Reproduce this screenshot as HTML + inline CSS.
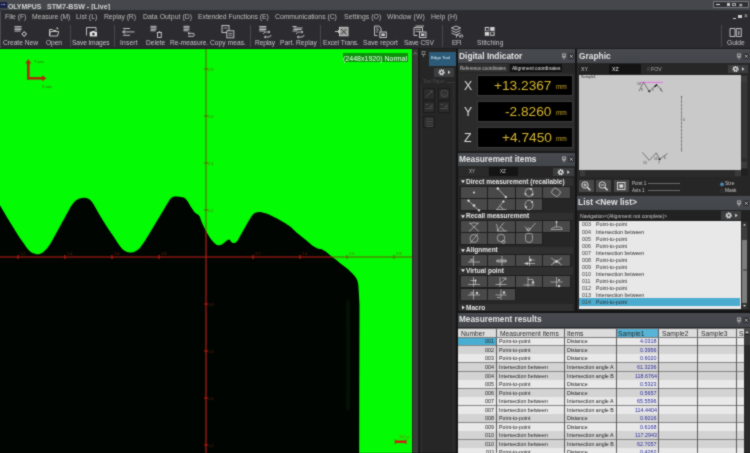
<!DOCTYPE html>
<html><head><meta charset="utf-8">
<style>
*{margin:0;padding:0;box-sizing:border-box}
html,body{width:750px;height:453px;overflow:hidden;background:#232325;font-family:"Liberation Sans",sans-serif}
.a{position:absolute}
.t{position:absolute;white-space:nowrap;line-height:1;will-change:transform}
.menu{color:#bdbdbd;font-size:6.85px;top:14.2px}
.tb{color:#c4c4c4;top:40.2px;font-size:6.65px}
.sep{position:absolute;top:25px;width:1px;height:22px;background:#47484b}
</style></head><body>
<svg width="0" height="0" style="position:absolute"><filter id="sb" x="0" y="0" width="100%" height="100%" color-interpolation-filters="sRGB"><feConvolveMatrix order="3" kernelMatrix="1 2 1 2 12 2 1 2 1" edgeMode="duplicate" preserveAlpha="true"/></filter></svg><div style="position:absolute;left:0;top:0;width:750px;height:453px;filter:url(#sb)">
<!-- TITLE BAR -->
<div class="a" style="left:0;top:0;width:750px;height:10px;background:#45474c"></div>
<div class="a" style="left:0;top:1.8px;width:6.5px;height:6.5px;background:#1b2048"></div>
<div class="a" style="left:0.5px;top:3.6px;width:1.6px;height:1.8px;background:#9aa4d0"></div>
<div class="a" style="left:3.2px;top:3.6px;width:1.6px;height:1.8px;background:#9aa4d0"></div>
<div class="t" style="left:7.8px;top:3.5px;font-size:6.85px;font-weight:bold;color:#d2d2d2">OLYMPUS</div>
<div class="t" style="left:46.8px;top:3.5px;font-size:7.1px;font-weight:bold;color:#d2d2d2">STM7-BSW - [Live]</div>
<div class="a" style="left:712.8px;top:0.8px;width:36.2px;height:7px;background:#77797d;border-radius:1px"></div>
<div class="a" style="left:714px;top:2.2px;width:34px;height:4.4px;background:#2e3034"></div>
<div class="a" style="left:716px;top:3.6px;width:4px;height:1.6px;background:#d8d8d8"></div>
<div class="a" style="left:726.5px;top:3.2px;width:3px;height:2.4px;background:#c8c8c8"></div>
<div class="a" style="left:732px;top:3px;width:3.5px;height:2.5px;border:0.7px solid #aaa"></div>
<div class="t" style="left:739.2px;top:1.9px;font-size:6px;color:#e8e8e8;font-weight:bold">×</div>
<!-- MENU BAR -->
<div class="a" style="left:0;top:10px;width:750px;height:39px;background:#2c2c30"></div>
<div class="a" style="left:0;top:11px;width:1px;height:38px;background:#4a4b4e"></div>
<div class="t menu" style="left:4.8px;letter-spacing:-0.055px">File (F)</div>
<div class="t menu" style="left:32px;letter-spacing:-0.042px">Measure (M)</div>
<div class="t menu" style="left:76.4px;letter-spacing:0.052px">List (L)</div>
<div class="t menu" style="left:104.1px;letter-spacing:-0.082px">Replay (R)</div>
<div class="t menu" style="left:142.5px;letter-spacing:0.054px">Data Output (D)</div>
<div class="t menu" style="left:198.1px;letter-spacing:-0.037px">Extended Functions (E)</div>
<div class="t menu" style="left:275.3px;letter-spacing:-0.031px">Communications (C)</div>
<div class="t menu" style="left:343.9px;letter-spacing:0.069px">Settings (O)</div>
<div class="t menu" style="left:387.2px;letter-spacing:0.045px">Window (W)</div>
<div class="t menu" style="left:431.3px;letter-spacing:0.114px">Help (H)</div>
<!-- mdi buttons -->
<div class="a" style="left:733px;top:18px;width:3px;height:1px;background:#ccc"></div>
<div class="a" style="left:738.3px;top:14.5px;width:3.8px;height:3.8px;background:#cfcfcf"></div>
<div class="t" style="left:744px;top:13.2px;font-size:6.5px;color:#ccc">×</div>
<div class="a" style="left:0;top:48px;width:750px;height:1px;background:#1d1e20"></div>
<!-- TOOLBAR labels -->
<div class="t tb" style="left:3.4px;letter-spacing:-0.012px">Create New</div>
<div class="t tb" style="left:46px;letter-spacing:-0.090px">Open</div>
<div class="t tb" style="left:72.3px;letter-spacing:-0.074px">Save images</div>
<div class="t tb" style="left:119.7px;letter-spacing:0.194px">Insert</div>
<div class="t tb" style="left:146px;letter-spacing:0.015px">Delete</div>
<div class="t tb" style="left:169.6px;letter-spacing:-0.004px">Re-measure.</div>
<div class="t tb" style="left:210px;letter-spacing:0.058px">Copy meas.</div>
<div class="t tb" style="left:255.4px;letter-spacing:-0.140px">Replay</div>
<div class="t tb" style="left:279.9px;letter-spacing:0.019px">Part. Replay</div>
<div class="t tb" style="left:323px;letter-spacing:-0.054px">Excel Trans.</div>
<div class="t tb" style="left:363.1px;letter-spacing:0.052px">Save report</div>
<div class="t tb" style="left:403.6px;letter-spacing:-0.111px">Save CSV</div>
<div class="t tb" style="left:452px;letter-spacing:-0.323px">EFI</div>
<div class="t tb" style="left:476.6px;letter-spacing:0.112px">Stitching</div>
<div class="t tb" style="left:727px;letter-spacing:-0.037px">Guide</div>
<div class="sep" style="left:70.2px"></div>
<div class="sep" style="left:113.6px"></div>
<div class="sep" style="left:250.2px"></div>
<div class="sep" style="left:320.1px"></div>
<div class="sep" style="left:441.6px"></div>
<div class="sep" style="left:720.6px"></div>
<!-- TOOLBAR icons -->
<svg class="a" style="left:0;top:0" width="750" height="49" viewBox="0 0 750 49" fill="none" stroke="#cfcfcf" stroke-width="0.9">
 <!-- create new -->
 <path d="M14.5,26.6h7M14.5,28.1h7M14.5,29.6h7M14.5,31.1h6"/>
 <circle cx="24.2" cy="34" r="1.8"/>
 <path d="M24.2,31.3v0.9M24.2,35.9v0.9M21.5,34h0.9M26,34h0.9" />
 <!-- open -->
 <path d="M49.5,29.5v6.5h8l1.2-4.5h-8.2l-1,4.5M49.5,29.5h3l0.8,1h3" />
 <path d="M56.5,27.6l1.6,1.4" stroke-width="1.2"/>
 <!-- save images -->
 <path d="M86.5,35.5v-8h9.5v3.5"/>
 <rect x="89.8" y="31.8" width="7.2" height="4.6" fill="#e8e8e8" stroke="none"/>
 <rect x="91.8" y="31" width="3" height="1.2" fill="#e8e8e8" stroke="none"/>
 <circle cx="93.4" cy="34.1" r="1.3" fill="#2c2c30" stroke="none"/>
 <!-- insert -->
 <path d="M123,28.5h7M123,35.3h7M122.5,31.9h12M125.3,30l-2.6,1.9l2.6,1.9"/>
 <!-- delete -->
 <path d="M150.5,26.3h6M150.5,27.8h6M150.5,29.3h6M150.5,30.8h5"/>
 <path d="M156.8,32.5h5.2M157.5,33v4.5h3.8v-4.5M158.8,31.7h1.4"/>
 <!-- re-measure -->
 <path d="M183.5,26.3h6M183.5,27.8h6M183.5,29.3h6M183.5,30.8h5"/>
 <path d="M188,33.3h5c1.8,0,1.8,3,0,3h-5M189.5,32l-1.5,1.3l1.5,1.3"/>
 <!-- copy meas -->
 <rect x="222" y="25.5" width="7" height="7"/>
 <rect x="226.8" y="30.8" width="7" height="7" fill="#2c2c30"/>
 <path d="M223.5,28h4M228.3,33.4h4M228.3,35.3h4" stroke-width="0.7"/>
 <!-- replay -->
 <path d="M259.3,26.5h7M259.3,28h7M259.3,29.5h7M259.3,31h6"/>
 <path d="M263.5,34c0,-1.5 1.5,-2 3,-2h3.5M268.5,31l1.5,1l-1.5,1M271,35c0,1.5 -1.5,2 -3,2h-3.5M265.8,38l-1.5,-1l1.5,-1"/>
 <!-- part replay -->
 <path d="M292.5,26.5h4M293.5,28h9M293.5,29.5h8M292.5,31h5"/>
 <path d="M296.5,34c0,-1.5 1.5,-2 3,-2h3.5M301.5,31l1.5,1l-1.5,1M304,35c0,1.5 -1.5,2 -3,2h-3.5M298.8,38l-1.5,-1l1.5,-1"/>
 <!-- excel trans -->
 <rect x="339.5" y="27.3" width="8.5" height="8.5" fill="#9a9a9a" stroke="#cfcfcf"/>
 <path d="M341,29l5.5,5.5M346.5,29l-5.5,5.5" stroke="#333" stroke-width="0.9"/>
 <path d="M335,31.5h4.5M338,30l1.5,1.5l-1.5,1.5"/>
 <!-- save report -->
 <path d="M374.5,26h4.5l2,2v5M374.5,26v9.5h3"/>
 <path d="M376,28h2.5M376,30h3M376,32h2" stroke-width="0.7"/>
 <rect x="379.8" y="32" width="6.5" height="5.5" fill="#2c2c30"/>
 <rect x="381.3" y="33.5" width="3.5" height="2.5" fill="#cfcfcf" stroke="none"/>
 <!-- save csv -->
 <path d="M414,27.5h8.5v5M414,27.5v8h3.5M415.5,26h8.5"/>
 <path d="M415.5,29.5h5.5M415.5,31.5h5.5" stroke-width="0.7"/>
 <rect x="419.5" y="32" width="6.5" height="5.5" fill="#2c2c30"/>
 <rect x="421" y="33.5" width="3.5" height="2.5" fill="#cfcfcf" stroke="none"/>
 <!-- efi -->
 <path d="M451.5,28l4.5,-2l4.5,2l-4.5,2zM451.5,30.5l4.5,2l4.5,-2M451.5,33l4.5,2l4.5,-2"/>
 <path d="M456.5,37.5v-2.3h2.5M459.8,37.5v-2.5M460.8,37.5v-2.3c0,-0.6 1.8,-0.6 1.8,0v2.3" stroke-width="0.8"/>
 <!-- stitching -->
 <rect x="484.8" y="27" width="9.8" height="8.8" fill="#d0d0d0" stroke="none"/>
 <path d="M489.7,27v8.8M484.8,31.4h9.8" stroke="#2c2c30" stroke-width="1"/>
 <rect x="485.8" y="28" width="2.8" height="2.4" fill="#2c2c30" stroke="none"/>
 <rect x="490.8" y="32.4" width="2.8" height="2.4" fill="#2c2c30" stroke="none"/>
 <!-- guide -->
 <path d="M730,28.5h5v8h-5zM736.3,28.5h5v8h-5z"/>
 <path d="M738.8,31v4M738.8,29.5v0.6" stroke-width="1"/>
</svg>

<div class="a" style="left:0;top:49px;width:412px;height:404px;background:#03fb03"></div>
<svg class="a" style="left:0;top:0" width="412" height="453" viewBox="0 0 412 453">
<defs><clipPath id="dk"><path d="M-9.67,189.53 L-9.35,190.06 L-8.92,190.77 L-8.42,191.57 L-7.91,192.41 L-7.39,193.26 L-6.86,194.11 L-6.34,194.97 L-5.82,195.82 L-5.29,196.67 L-4.77,197.52 L-4.25,198.38 L-3.72,199.23 L-3.20,200.08 L-2.68,200.93 L-2.16,201.79 L-1.63,202.64 L-1.11,203.49 L-0.59,204.35 L-0.08,205.20 L0.44,206.06 L0.94,206.92 L1.45,207.79 L1.95,208.65 L2.45,209.52 L2.96,210.38 L3.46,211.24 L3.96,212.11 L4.47,212.97 L4.97,213.84 L5.47,214.70 L5.98,215.56 L6.48,216.43 L6.99,217.29 L7.51,218.14 L8.03,218.99 L8.56,219.85 L9.08,220.70 L9.61,221.54 L10.14,222.39 L10.67,223.24 L11.19,224.09 L11.72,224.94 L12.25,225.79 L12.78,226.64 L13.30,227.49 L13.82,228.35 L14.35,229.20 L14.87,230.05 L15.39,230.90 L15.91,231.76 L16.43,232.61 L16.96,233.46 L17.48,234.32 L18.01,235.17 L18.54,236.01 L19.09,236.85 L19.65,237.67 L20.23,238.49 L20.81,239.30 L21.40,240.11 L21.99,240.92 L22.57,241.73 L23.15,242.55 L23.72,243.37 L24.28,244.19 L24.84,245.03 L25.39,245.86 L25.95,246.68 L26.53,247.50 L27.13,248.29 L27.77,249.05 L28.44,249.79 L29.13,250.51 L29.84,251.21 L30.59,251.84 L31.39,252.39 L32.25,252.84 L33.17,253.22 L34.10,253.56 L35.04,253.87 L35.99,254.14 L36.93,254.32 L37.86,254.34 L38.80,254.20 L39.72,253.92 L40.64,253.56 L41.54,253.15 L42.41,252.68 L43.22,252.13 L43.98,251.51 L44.70,250.83 L45.40,250.12 L46.09,249.39 L46.75,248.65 L47.38,247.88 L47.99,247.08 L48.58,246.28 L49.16,245.46 L49.73,244.64 L50.28,243.81 L50.82,242.97 L51.33,242.11 L51.83,241.25 L52.31,240.37 L52.80,239.50 L53.28,238.62 L53.76,237.75 L54.24,236.87 L54.73,235.99 L55.21,235.12 L55.69,234.24 L56.17,233.36 L56.65,232.48 L57.12,231.61 L57.60,230.73 L58.08,229.85 L58.56,228.97 L59.04,228.09 L59.52,227.22 L60.00,226.34 L60.48,225.46 L60.95,224.58 L61.43,223.70 L61.91,222.83 L62.39,221.95 L62.87,221.07 L63.35,220.19 L63.82,219.31 L64.30,218.43 L64.78,217.56 L65.26,216.68 L65.74,215.80 L66.21,214.92 L66.69,214.04 L67.17,213.16 L67.65,212.29 L68.12,211.41 L68.60,210.53 L69.08,209.65 L69.56,208.77 L70.05,207.90 L70.55,207.04 L71.08,206.19 L71.63,205.36 L72.21,204.55 L72.80,203.74 L73.40,202.95 L74.03,202.17 L74.69,201.45 L75.43,200.81 L76.22,200.24 L77.07,199.72 L77.95,199.26 L78.84,198.84 L79.77,198.50 L80.72,198.24 L81.69,198.04 L82.67,197.89 L83.65,197.79 L84.63,197.78 L85.60,197.89 L86.55,198.10 L87.49,198.40 L88.39,198.78 L89.22,199.26 L89.98,199.85 L90.68,200.54 L91.35,201.27 L91.99,202.04 L92.59,202.83 L93.15,203.65 L93.67,204.50 L94.17,205.36 L94.66,206.24 L95.14,207.11 L95.63,207.98 L96.12,208.85 L96.61,209.72 L97.11,210.59 L97.61,211.46 L98.11,212.33 L98.61,213.19 L99.11,214.06 L99.61,214.92 L100.12,215.78 L100.63,216.64 L101.14,217.50 L101.66,218.36 L102.18,219.21 L102.70,220.06 L103.23,220.91 L103.75,221.77 L104.28,222.62 L104.80,223.47 L105.34,224.31 L105.87,225.16 L106.41,226.00 L106.95,226.84 L107.49,227.68 L108.04,228.52 L108.60,229.34 L109.17,230.17 L109.74,230.99 L110.32,231.81 L110.89,232.63 L111.46,233.45 L112.03,234.27 L112.60,235.09 L113.15,235.92 L113.71,236.76 L114.25,237.60 L114.79,238.44 L115.34,239.28 L115.88,240.12 L116.42,240.96 L116.96,241.80 L117.51,242.63 L118.06,243.47 L118.62,244.29 L119.20,245.11 L119.80,245.90 L120.42,246.69 L121.04,247.47 L121.68,248.24 L122.35,248.97 L123.06,249.65 L123.83,250.27 L124.65,250.82 L125.51,251.30 L126.40,251.71 L127.33,252.04 L128.29,252.28 L129.26,252.45 L130.24,252.53 L131.21,252.52 L132.19,252.40 L133.15,252.19 L134.10,251.91 L135.01,251.55 L135.90,251.12 L136.75,250.61 L137.56,250.05 L138.33,249.43 L139.05,248.75 L139.71,248.02 L140.34,247.24 L140.94,246.45 L141.55,245.66 L142.15,244.86 L142.74,244.05 L143.32,243.24 L143.89,242.42 L144.44,241.58 L144.97,240.74 L145.50,239.89 L146.03,239.04 L146.56,238.19 L147.08,237.34 L147.61,236.49 L148.14,235.64 L148.66,234.79 L149.18,233.93 L149.70,233.08 L150.22,232.22 L150.73,231.36 L151.24,230.50 L151.75,229.65 L152.26,228.79 L152.77,227.93 L153.28,227.07 L153.80,226.21 L154.31,225.35 L154.82,224.49 L155.33,223.63 L155.84,222.77 L156.36,221.92 L156.88,221.06 L157.40,220.21 L157.92,219.35 L158.44,218.50 L158.96,217.64 L159.48,216.79 L160.00,215.93 L160.52,215.08 L161.04,214.23 L161.56,213.37 L162.07,212.52 L162.59,211.66 L163.09,210.79 L163.59,209.93 L164.09,209.06 L164.59,208.19 L165.09,207.33 L165.58,206.46 L166.08,205.59 L166.58,204.73 L167.10,203.87 L167.62,203.02 L168.15,202.17 L168.69,201.33 L169.24,200.49 L169.80,199.67 L170.39,198.89 L171.06,198.19 L171.81,197.59 L172.64,197.12 L173.54,196.79 L174.48,196.61 L175.46,196.54 L176.44,196.55 L177.44,196.60 L178.43,196.68 L179.43,196.79 L180.42,196.91 L181.41,197.05 L182.38,197.22 L183.31,197.46 L184.20,197.83 L185.01,198.33 L185.75,198.95 L186.43,199.65 L187.05,200.42 L187.60,201.24 L188.11,202.10 L188.61,202.96 L189.10,203.84 L189.59,204.70 L190.10,205.57 L190.62,206.42 L191.16,207.26 L191.71,208.09 L192.27,208.93 L192.82,209.76 L193.39,210.58 L193.97,211.38 L194.59,212.13 L195.29,212.80 L196.06,213.38 L196.89,213.90 L197.72,214.42 L198.50,214.99 L199.16,215.66 L199.67,216.43 L200.04,217.30 L200.34,218.22 L200.63,219.17 L200.95,220.11 L201.30,221.04 L201.68,221.96 L202.07,222.89 L202.46,223.80 L202.87,224.72 L203.29,225.62 L203.73,226.52 L204.18,227.41 L204.63,228.31 L205.08,229.20 L205.54,230.09 L206.00,230.97 L206.47,231.86 L206.96,232.73 L207.45,233.60 L207.95,234.46 L208.46,235.33 L208.97,236.18 L209.50,237.03 L210.05,237.86 L210.64,238.67 L211.24,239.46 L211.86,240.25 L212.49,241.02 L213.14,241.78 L213.82,242.50 L214.54,243.19 L215.29,243.83 L216.08,244.41 L216.90,244.90 L217.75,245.22 L218.64,245.34 L219.57,245.26 L220.50,245.02 L221.40,244.67 L222.25,244.21 L223.06,243.65 L223.83,243.03 L224.59,242.38 L225.34,241.73 L226.10,241.09 L226.88,240.49 L227.68,240.00 L228.48,239.67 L229.20,239.61 L229.81,239.88 L230.31,240.46 L230.77,241.19 L231.29,241.92 L231.93,242.50 L232.71,242.89 L233.58,243.06 L234.47,243.01 L235.32,242.74 L236.09,242.25 L236.77,241.59 L237.36,240.82 L237.89,239.99 L238.39,239.13 L238.87,238.25 L239.36,237.38 L239.85,236.51 L240.34,235.63 L240.83,234.76 L241.32,233.89 L241.81,233.02 L242.30,232.15 L242.80,231.28 L243.29,230.41 L243.78,229.54 L244.27,228.67 L244.77,227.80 L245.26,226.93 L245.75,226.06 L246.25,225.19 L246.74,224.32 L247.24,223.46 L247.74,222.59 L248.23,221.72 L248.73,220.85 L249.23,219.99 L249.75,219.13 L250.27,218.28 L250.81,217.44 L251.36,216.60 L251.92,215.78 L252.51,214.99 L253.17,214.27 L253.90,213.65 L254.71,213.12 L255.59,212.70 L256.51,212.38 L257.46,212.17 L258.44,212.06 L259.43,212.02 L260.41,212.07 L261.39,212.19 L262.36,212.40 L263.31,212.66 L264.27,212.95 L265.22,213.25 L266.18,213.55 L267.13,213.86 L268.07,214.20 L268.99,214.57 L269.90,214.98 L270.80,215.41 L271.70,215.85 L272.59,216.30 L273.49,216.74 L274.38,217.19 L275.27,217.65 L276.16,218.11 L277.04,218.58 L277.91,219.07 L278.79,219.56 L279.66,220.05 L280.53,220.54 L281.40,221.04 L282.26,221.53 L283.13,222.03 L283.99,222.53 L284.85,223.05 L285.70,223.57 L286.55,224.10 L287.40,224.64 L288.24,225.17 L289.07,225.73 L289.88,226.30 L290.66,226.91 L291.41,227.57 L292.14,228.25 L292.85,228.95 L293.56,229.66 L294.27,230.36 L294.99,231.06 L295.71,231.75 L296.46,232.41 L297.22,233.06 L297.99,233.69 L298.77,234.32 L299.55,234.95 L300.33,235.58 L301.11,236.20 L301.89,236.83 L302.67,237.45 L303.45,238.08 L304.23,238.70 L305.01,239.33 L305.79,239.96 L306.56,240.59 L307.32,241.23 L308.08,241.89 L308.83,242.55 L309.58,243.21 L310.33,243.87 L311.08,244.53 L311.85,245.16 L312.65,245.76 L313.47,246.31 L314.33,246.82 L315.20,247.31 L316.08,247.77 L316.97,248.19 L317.89,248.52 L318.83,248.75 L319.79,248.91 L320.74,249.08 L321.67,249.33 L322.57,249.69 L323.45,250.14 L324.31,250.65 L325.14,251.18 L325.96,251.76 L326.74,252.37 L327.51,253.01 L328.27,253.66 L329.02,254.32 L329.78,254.97 L330.54,255.62 L331.31,256.25 L332.10,256.86 L332.90,257.46 L333.71,258.05 L334.52,258.64 L335.32,259.24 L336.10,259.85 L336.88,260.48 L337.66,261.12 L338.42,261.75 L339.19,262.39 L339.96,263.03 L340.74,263.66 L341.52,264.29 L342.31,264.90 L343.10,265.51 L343.90,266.11 L344.70,266.71 L345.51,267.30 L346.31,267.90 L347.10,268.51 L347.87,269.14 L348.62,269.80 L349.35,270.48 L350.07,271.17 L350.78,271.88 L351.48,272.59 L352.19,273.30 L352.88,274.02 L353.55,274.75 L354.20,275.51 L354.82,276.29 L355.43,277.09 L356.00,277.90 L356.52,278.74 L356.97,279.61 L357.32,280.53 L357.61,281.47 L357.85,282.44 L358.04,283.41 L358.19,284.40 L358.31,285.39 L358.40,286.39 L358.48,287.38 L358.55,288.38 L358.62,289.38 L358.69,290.37 L358.75,291.37 L358.81,292.37 L358.87,293.37 L358.92,294.37 L358.98,295.37 L359.03,296.36 L359.08,297.36 L359.14,298.36 L359.19,299.36 L359.25,300.36 L359.30,301.36 L359.35,302.36 L359.40,303.35 L359.44,304.35 L359.47,305.35 L359.49,306.35 L359.49,307.35 L359.49,308.35 L359.49,309.35 L359.49,310.35 L359.48,311.35 L359.48,312.35 L359.48,313.35 L359.48,314.35 L359.47,315.35 L359.47,316.35 L359.47,317.35 L359.46,318.35 L359.46,319.35 L359.46,320.35 L359.46,321.35 L359.45,322.35 L359.45,323.35 L359.45,324.35 L359.45,325.35 L359.44,326.35 L359.44,327.35 L359.44,328.35 L359.44,329.35 L359.43,330.35 L359.43,331.35 L359.43,332.35 L359.42,333.35 L359.42,334.35 L359.42,335.35 L359.42,336.35 L359.41,337.35 L359.41,338.35 L359.41,339.35 L359.41,340.35 L359.40,341.35 L359.40,342.35 L359.40,343.35 L359.40,344.35 L359.39,345.35 L359.39,346.35 L359.39,347.35 L359.38,348.35 L359.38,349.35 L359.38,350.35 L359.38,351.35 L359.37,352.35 L359.37,353.35 L359.37,354.35 L359.37,355.35 L359.36,356.35 L359.36,357.35 L359.36,358.35 L359.36,359.35 L359.35,360.35 L359.35,361.35 L359.35,362.35 L359.34,363.35 L359.34,364.35 L359.34,365.35 L359.34,366.35 L359.33,367.35 L359.33,368.35 L359.33,369.35 L359.33,370.35 L359.32,371.35 L359.32,372.35 L359.32,373.35 L359.32,374.35 L359.31,375.35 L359.31,376.35 L359.31,377.35 L359.30,378.35 L359.30,379.35 L359.30,380.35 L359.30,381.35 L359.30,382.35 L359.30,383.35 L359.29,384.35 L359.29,385.35 L359.29,386.35 L359.29,387.35 L359.29,388.35 L359.29,389.35 L359.29,390.35 L359.28,391.35 L359.28,392.35 L359.28,393.35 L359.28,394.35 L359.28,395.35 L359.28,396.35 L359.28,397.35 L359.27,398.35 L359.27,399.35 L359.27,400.35 L359.27,401.35 L359.27,402.35 L359.27,403.35 L359.27,404.35 L359.27,405.35 L359.26,406.35 L359.26,407.35 L359.26,408.35 L359.26,409.35 L359.26,410.35 L359.26,411.35 L359.26,412.35 L359.25,413.35 L359.25,414.35 L359.25,415.35 L359.25,416.35 L359.25,417.35 L359.25,418.35 L359.25,419.35 L359.24,420.35 L359.24,421.35 L359.24,422.35 L359.24,423.35 L359.24,424.35 L359.24,425.35 L359.24,426.35 L359.24,427.35 L359.23,428.35 L359.23,429.35 L359.23,430.35 L359.23,431.35 L359.23,432.35 L359.23,433.35 L359.23,434.35 L359.22,435.35 L359.22,436.35 L359.22,437.35 L359.22,438.35 L359.22,439.35 L359.22,440.35 L359.22,441.35 L359.21,442.35 L359.21,443.35 L359.21,444.35 L359.21,445.35 L359.21,446.35 L359.21,447.35 L359.21,448.35 L359.21,449.35 L359.20,450.35 L359.20,451.35 L359.20,452.35 L359.20,453.35 L359.20,454.35 L359.20,455.35 L359.20,456.35 L359.20,457.35 L359.20,458.35 L359.20,459.35 L359.20,460.35 L359.20,461.35 L359.20,462.35 L359.20,463.35 L359.20,464.35 L359.20,465.35 L359.20,466.35 L359.20,467.35 L359.20,468.35 L359.20,469.35 L359.20,470.35 L359.20,471.35 L359.20,472.32 L359.20,473.21 L359.20,473.94 L359.2,475 L-10,475 Z"/></clipPath><filter id="bl"><feGaussianBlur stdDeviation="1.5"/></filter></defs>
<path fill="#010501" d="M-9.67,189.53 L-9.35,190.06 L-8.92,190.77 L-8.42,191.57 L-7.91,192.41 L-7.39,193.26 L-6.86,194.11 L-6.34,194.97 L-5.82,195.82 L-5.29,196.67 L-4.77,197.52 L-4.25,198.38 L-3.72,199.23 L-3.20,200.08 L-2.68,200.93 L-2.16,201.79 L-1.63,202.64 L-1.11,203.49 L-0.59,204.35 L-0.08,205.20 L0.44,206.06 L0.94,206.92 L1.45,207.79 L1.95,208.65 L2.45,209.52 L2.96,210.38 L3.46,211.24 L3.96,212.11 L4.47,212.97 L4.97,213.84 L5.47,214.70 L5.98,215.56 L6.48,216.43 L6.99,217.29 L7.51,218.14 L8.03,218.99 L8.56,219.85 L9.08,220.70 L9.61,221.54 L10.14,222.39 L10.67,223.24 L11.19,224.09 L11.72,224.94 L12.25,225.79 L12.78,226.64 L13.30,227.49 L13.82,228.35 L14.35,229.20 L14.87,230.05 L15.39,230.90 L15.91,231.76 L16.43,232.61 L16.96,233.46 L17.48,234.32 L18.01,235.17 L18.54,236.01 L19.09,236.85 L19.65,237.67 L20.23,238.49 L20.81,239.30 L21.40,240.11 L21.99,240.92 L22.57,241.73 L23.15,242.55 L23.72,243.37 L24.28,244.19 L24.84,245.03 L25.39,245.86 L25.95,246.68 L26.53,247.50 L27.13,248.29 L27.77,249.05 L28.44,249.79 L29.13,250.51 L29.84,251.21 L30.59,251.84 L31.39,252.39 L32.25,252.84 L33.17,253.22 L34.10,253.56 L35.04,253.87 L35.99,254.14 L36.93,254.32 L37.86,254.34 L38.80,254.20 L39.72,253.92 L40.64,253.56 L41.54,253.15 L42.41,252.68 L43.22,252.13 L43.98,251.51 L44.70,250.83 L45.40,250.12 L46.09,249.39 L46.75,248.65 L47.38,247.88 L47.99,247.08 L48.58,246.28 L49.16,245.46 L49.73,244.64 L50.28,243.81 L50.82,242.97 L51.33,242.11 L51.83,241.25 L52.31,240.37 L52.80,239.50 L53.28,238.62 L53.76,237.75 L54.24,236.87 L54.73,235.99 L55.21,235.12 L55.69,234.24 L56.17,233.36 L56.65,232.48 L57.12,231.61 L57.60,230.73 L58.08,229.85 L58.56,228.97 L59.04,228.09 L59.52,227.22 L60.00,226.34 L60.48,225.46 L60.95,224.58 L61.43,223.70 L61.91,222.83 L62.39,221.95 L62.87,221.07 L63.35,220.19 L63.82,219.31 L64.30,218.43 L64.78,217.56 L65.26,216.68 L65.74,215.80 L66.21,214.92 L66.69,214.04 L67.17,213.16 L67.65,212.29 L68.12,211.41 L68.60,210.53 L69.08,209.65 L69.56,208.77 L70.05,207.90 L70.55,207.04 L71.08,206.19 L71.63,205.36 L72.21,204.55 L72.80,203.74 L73.40,202.95 L74.03,202.17 L74.69,201.45 L75.43,200.81 L76.22,200.24 L77.07,199.72 L77.95,199.26 L78.84,198.84 L79.77,198.50 L80.72,198.24 L81.69,198.04 L82.67,197.89 L83.65,197.79 L84.63,197.78 L85.60,197.89 L86.55,198.10 L87.49,198.40 L88.39,198.78 L89.22,199.26 L89.98,199.85 L90.68,200.54 L91.35,201.27 L91.99,202.04 L92.59,202.83 L93.15,203.65 L93.67,204.50 L94.17,205.36 L94.66,206.24 L95.14,207.11 L95.63,207.98 L96.12,208.85 L96.61,209.72 L97.11,210.59 L97.61,211.46 L98.11,212.33 L98.61,213.19 L99.11,214.06 L99.61,214.92 L100.12,215.78 L100.63,216.64 L101.14,217.50 L101.66,218.36 L102.18,219.21 L102.70,220.06 L103.23,220.91 L103.75,221.77 L104.28,222.62 L104.80,223.47 L105.34,224.31 L105.87,225.16 L106.41,226.00 L106.95,226.84 L107.49,227.68 L108.04,228.52 L108.60,229.34 L109.17,230.17 L109.74,230.99 L110.32,231.81 L110.89,232.63 L111.46,233.45 L112.03,234.27 L112.60,235.09 L113.15,235.92 L113.71,236.76 L114.25,237.60 L114.79,238.44 L115.34,239.28 L115.88,240.12 L116.42,240.96 L116.96,241.80 L117.51,242.63 L118.06,243.47 L118.62,244.29 L119.20,245.11 L119.80,245.90 L120.42,246.69 L121.04,247.47 L121.68,248.24 L122.35,248.97 L123.06,249.65 L123.83,250.27 L124.65,250.82 L125.51,251.30 L126.40,251.71 L127.33,252.04 L128.29,252.28 L129.26,252.45 L130.24,252.53 L131.21,252.52 L132.19,252.40 L133.15,252.19 L134.10,251.91 L135.01,251.55 L135.90,251.12 L136.75,250.61 L137.56,250.05 L138.33,249.43 L139.05,248.75 L139.71,248.02 L140.34,247.24 L140.94,246.45 L141.55,245.66 L142.15,244.86 L142.74,244.05 L143.32,243.24 L143.89,242.42 L144.44,241.58 L144.97,240.74 L145.50,239.89 L146.03,239.04 L146.56,238.19 L147.08,237.34 L147.61,236.49 L148.14,235.64 L148.66,234.79 L149.18,233.93 L149.70,233.08 L150.22,232.22 L150.73,231.36 L151.24,230.50 L151.75,229.65 L152.26,228.79 L152.77,227.93 L153.28,227.07 L153.80,226.21 L154.31,225.35 L154.82,224.49 L155.33,223.63 L155.84,222.77 L156.36,221.92 L156.88,221.06 L157.40,220.21 L157.92,219.35 L158.44,218.50 L158.96,217.64 L159.48,216.79 L160.00,215.93 L160.52,215.08 L161.04,214.23 L161.56,213.37 L162.07,212.52 L162.59,211.66 L163.09,210.79 L163.59,209.93 L164.09,209.06 L164.59,208.19 L165.09,207.33 L165.58,206.46 L166.08,205.59 L166.58,204.73 L167.10,203.87 L167.62,203.02 L168.15,202.17 L168.69,201.33 L169.24,200.49 L169.80,199.67 L170.39,198.89 L171.06,198.19 L171.81,197.59 L172.64,197.12 L173.54,196.79 L174.48,196.61 L175.46,196.54 L176.44,196.55 L177.44,196.60 L178.43,196.68 L179.43,196.79 L180.42,196.91 L181.41,197.05 L182.38,197.22 L183.31,197.46 L184.20,197.83 L185.01,198.33 L185.75,198.95 L186.43,199.65 L187.05,200.42 L187.60,201.24 L188.11,202.10 L188.61,202.96 L189.10,203.84 L189.59,204.70 L190.10,205.57 L190.62,206.42 L191.16,207.26 L191.71,208.09 L192.27,208.93 L192.82,209.76 L193.39,210.58 L193.97,211.38 L194.59,212.13 L195.29,212.80 L196.06,213.38 L196.89,213.90 L197.72,214.42 L198.50,214.99 L199.16,215.66 L199.67,216.43 L200.04,217.30 L200.34,218.22 L200.63,219.17 L200.95,220.11 L201.30,221.04 L201.68,221.96 L202.07,222.89 L202.46,223.80 L202.87,224.72 L203.29,225.62 L203.73,226.52 L204.18,227.41 L204.63,228.31 L205.08,229.20 L205.54,230.09 L206.00,230.97 L206.47,231.86 L206.96,232.73 L207.45,233.60 L207.95,234.46 L208.46,235.33 L208.97,236.18 L209.50,237.03 L210.05,237.86 L210.64,238.67 L211.24,239.46 L211.86,240.25 L212.49,241.02 L213.14,241.78 L213.82,242.50 L214.54,243.19 L215.29,243.83 L216.08,244.41 L216.90,244.90 L217.75,245.22 L218.64,245.34 L219.57,245.26 L220.50,245.02 L221.40,244.67 L222.25,244.21 L223.06,243.65 L223.83,243.03 L224.59,242.38 L225.34,241.73 L226.10,241.09 L226.88,240.49 L227.68,240.00 L228.48,239.67 L229.20,239.61 L229.81,239.88 L230.31,240.46 L230.77,241.19 L231.29,241.92 L231.93,242.50 L232.71,242.89 L233.58,243.06 L234.47,243.01 L235.32,242.74 L236.09,242.25 L236.77,241.59 L237.36,240.82 L237.89,239.99 L238.39,239.13 L238.87,238.25 L239.36,237.38 L239.85,236.51 L240.34,235.63 L240.83,234.76 L241.32,233.89 L241.81,233.02 L242.30,232.15 L242.80,231.28 L243.29,230.41 L243.78,229.54 L244.27,228.67 L244.77,227.80 L245.26,226.93 L245.75,226.06 L246.25,225.19 L246.74,224.32 L247.24,223.46 L247.74,222.59 L248.23,221.72 L248.73,220.85 L249.23,219.99 L249.75,219.13 L250.27,218.28 L250.81,217.44 L251.36,216.60 L251.92,215.78 L252.51,214.99 L253.17,214.27 L253.90,213.65 L254.71,213.12 L255.59,212.70 L256.51,212.38 L257.46,212.17 L258.44,212.06 L259.43,212.02 L260.41,212.07 L261.39,212.19 L262.36,212.40 L263.31,212.66 L264.27,212.95 L265.22,213.25 L266.18,213.55 L267.13,213.86 L268.07,214.20 L268.99,214.57 L269.90,214.98 L270.80,215.41 L271.70,215.85 L272.59,216.30 L273.49,216.74 L274.38,217.19 L275.27,217.65 L276.16,218.11 L277.04,218.58 L277.91,219.07 L278.79,219.56 L279.66,220.05 L280.53,220.54 L281.40,221.04 L282.26,221.53 L283.13,222.03 L283.99,222.53 L284.85,223.05 L285.70,223.57 L286.55,224.10 L287.40,224.64 L288.24,225.17 L289.07,225.73 L289.88,226.30 L290.66,226.91 L291.41,227.57 L292.14,228.25 L292.85,228.95 L293.56,229.66 L294.27,230.36 L294.99,231.06 L295.71,231.75 L296.46,232.41 L297.22,233.06 L297.99,233.69 L298.77,234.32 L299.55,234.95 L300.33,235.58 L301.11,236.20 L301.89,236.83 L302.67,237.45 L303.45,238.08 L304.23,238.70 L305.01,239.33 L305.79,239.96 L306.56,240.59 L307.32,241.23 L308.08,241.89 L308.83,242.55 L309.58,243.21 L310.33,243.87 L311.08,244.53 L311.85,245.16 L312.65,245.76 L313.47,246.31 L314.33,246.82 L315.20,247.31 L316.08,247.77 L316.97,248.19 L317.89,248.52 L318.83,248.75 L319.79,248.91 L320.74,249.08 L321.67,249.33 L322.57,249.69 L323.45,250.14 L324.31,250.65 L325.14,251.18 L325.96,251.76 L326.74,252.37 L327.51,253.01 L328.27,253.66 L329.02,254.32 L329.78,254.97 L330.54,255.62 L331.31,256.25 L332.10,256.86 L332.90,257.46 L333.71,258.05 L334.52,258.64 L335.32,259.24 L336.10,259.85 L336.88,260.48 L337.66,261.12 L338.42,261.75 L339.19,262.39 L339.96,263.03 L340.74,263.66 L341.52,264.29 L342.31,264.90 L343.10,265.51 L343.90,266.11 L344.70,266.71 L345.51,267.30 L346.31,267.90 L347.10,268.51 L347.87,269.14 L348.62,269.80 L349.35,270.48 L350.07,271.17 L350.78,271.88 L351.48,272.59 L352.19,273.30 L352.88,274.02 L353.55,274.75 L354.20,275.51 L354.82,276.29 L355.43,277.09 L356.00,277.90 L356.52,278.74 L356.97,279.61 L357.32,280.53 L357.61,281.47 L357.85,282.44 L358.04,283.41 L358.19,284.40 L358.31,285.39 L358.40,286.39 L358.48,287.38 L358.55,288.38 L358.62,289.38 L358.69,290.37 L358.75,291.37 L358.81,292.37 L358.87,293.37 L358.92,294.37 L358.98,295.37 L359.03,296.36 L359.08,297.36 L359.14,298.36 L359.19,299.36 L359.25,300.36 L359.30,301.36 L359.35,302.36 L359.40,303.35 L359.44,304.35 L359.47,305.35 L359.49,306.35 L359.49,307.35 L359.49,308.35 L359.49,309.35 L359.49,310.35 L359.48,311.35 L359.48,312.35 L359.48,313.35 L359.48,314.35 L359.47,315.35 L359.47,316.35 L359.47,317.35 L359.46,318.35 L359.46,319.35 L359.46,320.35 L359.46,321.35 L359.45,322.35 L359.45,323.35 L359.45,324.35 L359.45,325.35 L359.44,326.35 L359.44,327.35 L359.44,328.35 L359.44,329.35 L359.43,330.35 L359.43,331.35 L359.43,332.35 L359.42,333.35 L359.42,334.35 L359.42,335.35 L359.42,336.35 L359.41,337.35 L359.41,338.35 L359.41,339.35 L359.41,340.35 L359.40,341.35 L359.40,342.35 L359.40,343.35 L359.40,344.35 L359.39,345.35 L359.39,346.35 L359.39,347.35 L359.38,348.35 L359.38,349.35 L359.38,350.35 L359.38,351.35 L359.37,352.35 L359.37,353.35 L359.37,354.35 L359.37,355.35 L359.36,356.35 L359.36,357.35 L359.36,358.35 L359.36,359.35 L359.35,360.35 L359.35,361.35 L359.35,362.35 L359.34,363.35 L359.34,364.35 L359.34,365.35 L359.34,366.35 L359.33,367.35 L359.33,368.35 L359.33,369.35 L359.33,370.35 L359.32,371.35 L359.32,372.35 L359.32,373.35 L359.32,374.35 L359.31,375.35 L359.31,376.35 L359.31,377.35 L359.30,378.35 L359.30,379.35 L359.30,380.35 L359.30,381.35 L359.30,382.35 L359.30,383.35 L359.29,384.35 L359.29,385.35 L359.29,386.35 L359.29,387.35 L359.29,388.35 L359.29,389.35 L359.29,390.35 L359.28,391.35 L359.28,392.35 L359.28,393.35 L359.28,394.35 L359.28,395.35 L359.28,396.35 L359.28,397.35 L359.27,398.35 L359.27,399.35 L359.27,400.35 L359.27,401.35 L359.27,402.35 L359.27,403.35 L359.27,404.35 L359.27,405.35 L359.26,406.35 L359.26,407.35 L359.26,408.35 L359.26,409.35 L359.26,410.35 L359.26,411.35 L359.26,412.35 L359.25,413.35 L359.25,414.35 L359.25,415.35 L359.25,416.35 L359.25,417.35 L359.25,418.35 L359.25,419.35 L359.24,420.35 L359.24,421.35 L359.24,422.35 L359.24,423.35 L359.24,424.35 L359.24,425.35 L359.24,426.35 L359.24,427.35 L359.23,428.35 L359.23,429.35 L359.23,430.35 L359.23,431.35 L359.23,432.35 L359.23,433.35 L359.23,434.35 L359.22,435.35 L359.22,436.35 L359.22,437.35 L359.22,438.35 L359.22,439.35 L359.22,440.35 L359.22,441.35 L359.21,442.35 L359.21,443.35 L359.21,444.35 L359.21,445.35 L359.21,446.35 L359.21,447.35 L359.21,448.35 L359.21,449.35 L359.20,450.35 L359.20,451.35 L359.20,452.35 L359.20,453.35 L359.20,454.35 L359.20,455.35 L359.20,456.35 L359.20,457.35 L359.20,458.35 L359.20,459.35 L359.20,460.35 L359.20,461.35 L359.20,462.35 L359.20,463.35 L359.20,464.35 L359.20,465.35 L359.20,466.35 L359.20,467.35 L359.20,468.35 L359.20,469.35 L359.20,470.35 L359.20,471.35 L359.20,472.32 L359.20,473.21 L359.20,473.94 L359.2,475 L-10,475 Z"/>
<path d="M347,300 Q351,350 348,410" stroke="#0f4a0f" stroke-width="6" fill="none" opacity="0.2" filter="url(#bl)"/>
<defs><clipPath id="gr"><path clip-rule="evenodd" d="M0,0H412V453H0Z M-9.67,189.53 L-9.35,190.06 L-8.92,190.77 L-8.42,191.57 L-7.91,192.41 L-7.39,193.26 L-6.86,194.11 L-6.34,194.97 L-5.82,195.82 L-5.29,196.67 L-4.77,197.52 L-4.25,198.38 L-3.72,199.23 L-3.20,200.08 L-2.68,200.93 L-2.16,201.79 L-1.63,202.64 L-1.11,203.49 L-0.59,204.35 L-0.08,205.20 L0.44,206.06 L0.94,206.92 L1.45,207.79 L1.95,208.65 L2.45,209.52 L2.96,210.38 L3.46,211.24 L3.96,212.11 L4.47,212.97 L4.97,213.84 L5.47,214.70 L5.98,215.56 L6.48,216.43 L6.99,217.29 L7.51,218.14 L8.03,218.99 L8.56,219.85 L9.08,220.70 L9.61,221.54 L10.14,222.39 L10.67,223.24 L11.19,224.09 L11.72,224.94 L12.25,225.79 L12.78,226.64 L13.30,227.49 L13.82,228.35 L14.35,229.20 L14.87,230.05 L15.39,230.90 L15.91,231.76 L16.43,232.61 L16.96,233.46 L17.48,234.32 L18.01,235.17 L18.54,236.01 L19.09,236.85 L19.65,237.67 L20.23,238.49 L20.81,239.30 L21.40,240.11 L21.99,240.92 L22.57,241.73 L23.15,242.55 L23.72,243.37 L24.28,244.19 L24.84,245.03 L25.39,245.86 L25.95,246.68 L26.53,247.50 L27.13,248.29 L27.77,249.05 L28.44,249.79 L29.13,250.51 L29.84,251.21 L30.59,251.84 L31.39,252.39 L32.25,252.84 L33.17,253.22 L34.10,253.56 L35.04,253.87 L35.99,254.14 L36.93,254.32 L37.86,254.34 L38.80,254.20 L39.72,253.92 L40.64,253.56 L41.54,253.15 L42.41,252.68 L43.22,252.13 L43.98,251.51 L44.70,250.83 L45.40,250.12 L46.09,249.39 L46.75,248.65 L47.38,247.88 L47.99,247.08 L48.58,246.28 L49.16,245.46 L49.73,244.64 L50.28,243.81 L50.82,242.97 L51.33,242.11 L51.83,241.25 L52.31,240.37 L52.80,239.50 L53.28,238.62 L53.76,237.75 L54.24,236.87 L54.73,235.99 L55.21,235.12 L55.69,234.24 L56.17,233.36 L56.65,232.48 L57.12,231.61 L57.60,230.73 L58.08,229.85 L58.56,228.97 L59.04,228.09 L59.52,227.22 L60.00,226.34 L60.48,225.46 L60.95,224.58 L61.43,223.70 L61.91,222.83 L62.39,221.95 L62.87,221.07 L63.35,220.19 L63.82,219.31 L64.30,218.43 L64.78,217.56 L65.26,216.68 L65.74,215.80 L66.21,214.92 L66.69,214.04 L67.17,213.16 L67.65,212.29 L68.12,211.41 L68.60,210.53 L69.08,209.65 L69.56,208.77 L70.05,207.90 L70.55,207.04 L71.08,206.19 L71.63,205.36 L72.21,204.55 L72.80,203.74 L73.40,202.95 L74.03,202.17 L74.69,201.45 L75.43,200.81 L76.22,200.24 L77.07,199.72 L77.95,199.26 L78.84,198.84 L79.77,198.50 L80.72,198.24 L81.69,198.04 L82.67,197.89 L83.65,197.79 L84.63,197.78 L85.60,197.89 L86.55,198.10 L87.49,198.40 L88.39,198.78 L89.22,199.26 L89.98,199.85 L90.68,200.54 L91.35,201.27 L91.99,202.04 L92.59,202.83 L93.15,203.65 L93.67,204.50 L94.17,205.36 L94.66,206.24 L95.14,207.11 L95.63,207.98 L96.12,208.85 L96.61,209.72 L97.11,210.59 L97.61,211.46 L98.11,212.33 L98.61,213.19 L99.11,214.06 L99.61,214.92 L100.12,215.78 L100.63,216.64 L101.14,217.50 L101.66,218.36 L102.18,219.21 L102.70,220.06 L103.23,220.91 L103.75,221.77 L104.28,222.62 L104.80,223.47 L105.34,224.31 L105.87,225.16 L106.41,226.00 L106.95,226.84 L107.49,227.68 L108.04,228.52 L108.60,229.34 L109.17,230.17 L109.74,230.99 L110.32,231.81 L110.89,232.63 L111.46,233.45 L112.03,234.27 L112.60,235.09 L113.15,235.92 L113.71,236.76 L114.25,237.60 L114.79,238.44 L115.34,239.28 L115.88,240.12 L116.42,240.96 L116.96,241.80 L117.51,242.63 L118.06,243.47 L118.62,244.29 L119.20,245.11 L119.80,245.90 L120.42,246.69 L121.04,247.47 L121.68,248.24 L122.35,248.97 L123.06,249.65 L123.83,250.27 L124.65,250.82 L125.51,251.30 L126.40,251.71 L127.33,252.04 L128.29,252.28 L129.26,252.45 L130.24,252.53 L131.21,252.52 L132.19,252.40 L133.15,252.19 L134.10,251.91 L135.01,251.55 L135.90,251.12 L136.75,250.61 L137.56,250.05 L138.33,249.43 L139.05,248.75 L139.71,248.02 L140.34,247.24 L140.94,246.45 L141.55,245.66 L142.15,244.86 L142.74,244.05 L143.32,243.24 L143.89,242.42 L144.44,241.58 L144.97,240.74 L145.50,239.89 L146.03,239.04 L146.56,238.19 L147.08,237.34 L147.61,236.49 L148.14,235.64 L148.66,234.79 L149.18,233.93 L149.70,233.08 L150.22,232.22 L150.73,231.36 L151.24,230.50 L151.75,229.65 L152.26,228.79 L152.77,227.93 L153.28,227.07 L153.80,226.21 L154.31,225.35 L154.82,224.49 L155.33,223.63 L155.84,222.77 L156.36,221.92 L156.88,221.06 L157.40,220.21 L157.92,219.35 L158.44,218.50 L158.96,217.64 L159.48,216.79 L160.00,215.93 L160.52,215.08 L161.04,214.23 L161.56,213.37 L162.07,212.52 L162.59,211.66 L163.09,210.79 L163.59,209.93 L164.09,209.06 L164.59,208.19 L165.09,207.33 L165.58,206.46 L166.08,205.59 L166.58,204.73 L167.10,203.87 L167.62,203.02 L168.15,202.17 L168.69,201.33 L169.24,200.49 L169.80,199.67 L170.39,198.89 L171.06,198.19 L171.81,197.59 L172.64,197.12 L173.54,196.79 L174.48,196.61 L175.46,196.54 L176.44,196.55 L177.44,196.60 L178.43,196.68 L179.43,196.79 L180.42,196.91 L181.41,197.05 L182.38,197.22 L183.31,197.46 L184.20,197.83 L185.01,198.33 L185.75,198.95 L186.43,199.65 L187.05,200.42 L187.60,201.24 L188.11,202.10 L188.61,202.96 L189.10,203.84 L189.59,204.70 L190.10,205.57 L190.62,206.42 L191.16,207.26 L191.71,208.09 L192.27,208.93 L192.82,209.76 L193.39,210.58 L193.97,211.38 L194.59,212.13 L195.29,212.80 L196.06,213.38 L196.89,213.90 L197.72,214.42 L198.50,214.99 L199.16,215.66 L199.67,216.43 L200.04,217.30 L200.34,218.22 L200.63,219.17 L200.95,220.11 L201.30,221.04 L201.68,221.96 L202.07,222.89 L202.46,223.80 L202.87,224.72 L203.29,225.62 L203.73,226.52 L204.18,227.41 L204.63,228.31 L205.08,229.20 L205.54,230.09 L206.00,230.97 L206.47,231.86 L206.96,232.73 L207.45,233.60 L207.95,234.46 L208.46,235.33 L208.97,236.18 L209.50,237.03 L210.05,237.86 L210.64,238.67 L211.24,239.46 L211.86,240.25 L212.49,241.02 L213.14,241.78 L213.82,242.50 L214.54,243.19 L215.29,243.83 L216.08,244.41 L216.90,244.90 L217.75,245.22 L218.64,245.34 L219.57,245.26 L220.50,245.02 L221.40,244.67 L222.25,244.21 L223.06,243.65 L223.83,243.03 L224.59,242.38 L225.34,241.73 L226.10,241.09 L226.88,240.49 L227.68,240.00 L228.48,239.67 L229.20,239.61 L229.81,239.88 L230.31,240.46 L230.77,241.19 L231.29,241.92 L231.93,242.50 L232.71,242.89 L233.58,243.06 L234.47,243.01 L235.32,242.74 L236.09,242.25 L236.77,241.59 L237.36,240.82 L237.89,239.99 L238.39,239.13 L238.87,238.25 L239.36,237.38 L239.85,236.51 L240.34,235.63 L240.83,234.76 L241.32,233.89 L241.81,233.02 L242.30,232.15 L242.80,231.28 L243.29,230.41 L243.78,229.54 L244.27,228.67 L244.77,227.80 L245.26,226.93 L245.75,226.06 L246.25,225.19 L246.74,224.32 L247.24,223.46 L247.74,222.59 L248.23,221.72 L248.73,220.85 L249.23,219.99 L249.75,219.13 L250.27,218.28 L250.81,217.44 L251.36,216.60 L251.92,215.78 L252.51,214.99 L253.17,214.27 L253.90,213.65 L254.71,213.12 L255.59,212.70 L256.51,212.38 L257.46,212.17 L258.44,212.06 L259.43,212.02 L260.41,212.07 L261.39,212.19 L262.36,212.40 L263.31,212.66 L264.27,212.95 L265.22,213.25 L266.18,213.55 L267.13,213.86 L268.07,214.20 L268.99,214.57 L269.90,214.98 L270.80,215.41 L271.70,215.85 L272.59,216.30 L273.49,216.74 L274.38,217.19 L275.27,217.65 L276.16,218.11 L277.04,218.58 L277.91,219.07 L278.79,219.56 L279.66,220.05 L280.53,220.54 L281.40,221.04 L282.26,221.53 L283.13,222.03 L283.99,222.53 L284.85,223.05 L285.70,223.57 L286.55,224.10 L287.40,224.64 L288.24,225.17 L289.07,225.73 L289.88,226.30 L290.66,226.91 L291.41,227.57 L292.14,228.25 L292.85,228.95 L293.56,229.66 L294.27,230.36 L294.99,231.06 L295.71,231.75 L296.46,232.41 L297.22,233.06 L297.99,233.69 L298.77,234.32 L299.55,234.95 L300.33,235.58 L301.11,236.20 L301.89,236.83 L302.67,237.45 L303.45,238.08 L304.23,238.70 L305.01,239.33 L305.79,239.96 L306.56,240.59 L307.32,241.23 L308.08,241.89 L308.83,242.55 L309.58,243.21 L310.33,243.87 L311.08,244.53 L311.85,245.16 L312.65,245.76 L313.47,246.31 L314.33,246.82 L315.20,247.31 L316.08,247.77 L316.97,248.19 L317.89,248.52 L318.83,248.75 L319.79,248.91 L320.74,249.08 L321.67,249.33 L322.57,249.69 L323.45,250.14 L324.31,250.65 L325.14,251.18 L325.96,251.76 L326.74,252.37 L327.51,253.01 L328.27,253.66 L329.02,254.32 L329.78,254.97 L330.54,255.62 L331.31,256.25 L332.10,256.86 L332.90,257.46 L333.71,258.05 L334.52,258.64 L335.32,259.24 L336.10,259.85 L336.88,260.48 L337.66,261.12 L338.42,261.75 L339.19,262.39 L339.96,263.03 L340.74,263.66 L341.52,264.29 L342.31,264.90 L343.10,265.51 L343.90,266.11 L344.70,266.71 L345.51,267.30 L346.31,267.90 L347.10,268.51 L347.87,269.14 L348.62,269.80 L349.35,270.48 L350.07,271.17 L350.78,271.88 L351.48,272.59 L352.19,273.30 L352.88,274.02 L353.55,274.75 L354.20,275.51 L354.82,276.29 L355.43,277.09 L356.00,277.90 L356.52,278.74 L356.97,279.61 L357.32,280.53 L357.61,281.47 L357.85,282.44 L358.04,283.41 L358.19,284.40 L358.31,285.39 L358.40,286.39 L358.48,287.38 L358.55,288.38 L358.62,289.38 L358.69,290.37 L358.75,291.37 L358.81,292.37 L358.87,293.37 L358.92,294.37 L358.98,295.37 L359.03,296.36 L359.08,297.36 L359.14,298.36 L359.19,299.36 L359.25,300.36 L359.30,301.36 L359.35,302.36 L359.40,303.35 L359.44,304.35 L359.47,305.35 L359.49,306.35 L359.49,307.35 L359.49,308.35 L359.49,309.35 L359.49,310.35 L359.48,311.35 L359.48,312.35 L359.48,313.35 L359.48,314.35 L359.47,315.35 L359.47,316.35 L359.47,317.35 L359.46,318.35 L359.46,319.35 L359.46,320.35 L359.46,321.35 L359.45,322.35 L359.45,323.35 L359.45,324.35 L359.45,325.35 L359.44,326.35 L359.44,327.35 L359.44,328.35 L359.44,329.35 L359.43,330.35 L359.43,331.35 L359.43,332.35 L359.42,333.35 L359.42,334.35 L359.42,335.35 L359.42,336.35 L359.41,337.35 L359.41,338.35 L359.41,339.35 L359.41,340.35 L359.40,341.35 L359.40,342.35 L359.40,343.35 L359.40,344.35 L359.39,345.35 L359.39,346.35 L359.39,347.35 L359.38,348.35 L359.38,349.35 L359.38,350.35 L359.38,351.35 L359.37,352.35 L359.37,353.35 L359.37,354.35 L359.37,355.35 L359.36,356.35 L359.36,357.35 L359.36,358.35 L359.36,359.35 L359.35,360.35 L359.35,361.35 L359.35,362.35 L359.34,363.35 L359.34,364.35 L359.34,365.35 L359.34,366.35 L359.33,367.35 L359.33,368.35 L359.33,369.35 L359.33,370.35 L359.32,371.35 L359.32,372.35 L359.32,373.35 L359.32,374.35 L359.31,375.35 L359.31,376.35 L359.31,377.35 L359.30,378.35 L359.30,379.35 L359.30,380.35 L359.30,381.35 L359.30,382.35 L359.30,383.35 L359.29,384.35 L359.29,385.35 L359.29,386.35 L359.29,387.35 L359.29,388.35 L359.29,389.35 L359.29,390.35 L359.28,391.35 L359.28,392.35 L359.28,393.35 L359.28,394.35 L359.28,395.35 L359.28,396.35 L359.28,397.35 L359.27,398.35 L359.27,399.35 L359.27,400.35 L359.27,401.35 L359.27,402.35 L359.27,403.35 L359.27,404.35 L359.27,405.35 L359.26,406.35 L359.26,407.35 L359.26,408.35 L359.26,409.35 L359.26,410.35 L359.26,411.35 L359.26,412.35 L359.25,413.35 L359.25,414.35 L359.25,415.35 L359.25,416.35 L359.25,417.35 L359.25,418.35 L359.25,419.35 L359.24,420.35 L359.24,421.35 L359.24,422.35 L359.24,423.35 L359.24,424.35 L359.24,425.35 L359.24,426.35 L359.24,427.35 L359.23,428.35 L359.23,429.35 L359.23,430.35 L359.23,431.35 L359.23,432.35 L359.23,433.35 L359.23,434.35 L359.22,435.35 L359.22,436.35 L359.22,437.35 L359.22,438.35 L359.22,439.35 L359.22,440.35 L359.22,441.35 L359.21,442.35 L359.21,443.35 L359.21,444.35 L359.21,445.35 L359.21,446.35 L359.21,447.35 L359.21,448.35 L359.21,449.35 L359.20,450.35 L359.20,451.35 L359.20,452.35 L359.20,453.35 L359.20,454.35 L359.20,455.35 L359.20,456.35 L359.20,457.35 L359.20,458.35 L359.20,459.35 L359.20,460.35 L359.20,461.35 L359.20,462.35 L359.20,463.35 L359.20,464.35 L359.20,465.35 L359.20,466.35 L359.20,467.35 L359.20,468.35 L359.20,469.35 L359.20,470.35 L359.20,471.35 L359.20,472.32 L359.20,473.21 L359.20,473.94 L359.2,475 L-10,475 Z"/></clipPath></defs>
<path d="M206,49V453M0,257H412M18,255v4M65,255v4M112,255v4M159,255v4M206,255v4M253,255v4M300,255v4M347,255v4M394,255v4M204,69h4M204,116h4M204,163h4M204,210h4M204,257h4M204,304h4M204,351h4M204,398h4M204,445h4" stroke="#6a5800" stroke-width="1" fill="none" clip-path="url(#gr)"/>
<path d="M206,49V453M0,257H412M18,255v4M65,255v4M112,255v4M159,255v4M206,255v4M253,255v4M300,255v4M347,255v4M394,255v4M204,69h4M204,116h4M204,163h4M204,210h4M204,257h4M204,304h4M204,351h4M204,398h4M204,445h4" stroke="#c41c18" stroke-width="1.1" fill="none" clip-path="url(#dk)"/>
</svg>
<div class="t" style="left:20px;top:251.5px;font-size:4px;color:#903010;opacity:0.7">1.2</div>
<div class="t" style="left:67px;top:251.5px;font-size:4px;color:#903010;opacity:0.7">1.4</div>
<div class="t" style="left:114px;top:251.5px;font-size:4px;color:#903010;opacity:0.7">1.6</div>
<div class="t" style="left:161px;top:251.5px;font-size:4px;color:#903010;opacity:0.7">1.8</div>
<div class="t" style="left:255px;top:251.5px;font-size:4px;color:#903010;opacity:0.7">2.2</div>
<div class="t" style="left:302px;top:251.5px;font-size:4px;color:#903010;opacity:0.7">2.4</div>
<div class="t" style="left:349px;top:251.5px;font-size:4px;color:#903010;opacity:0.7">2.6</div>
<div class="t" style="left:396px;top:251.5px;font-size:4px;color:#903010;opacity:0.7">2.8</div>
<div class="t" style="left:208px;top:67.5px;font-size:4px;color:#803010;opacity:0.7">2.8</div>
<div class="t" style="left:208px;top:114.5px;font-size:4px;color:#803010;opacity:0.7">2.6</div>
<div class="t" style="left:208px;top:161.5px;font-size:4px;color:#803010;opacity:0.7">2.4</div>
<div class="t" style="left:208px;top:208.5px;font-size:4px;color:#803010;opacity:0.7">2.2</div>
<div class="t" style="left:208px;top:302.5px;font-size:4px;color:#803010;opacity:0.7">1.8</div>
<div class="t" style="left:208px;top:349.5px;font-size:4px;color:#803010;opacity:0.7">1.6</div>
<div class="t" style="left:208px;top:396.5px;font-size:4px;color:#803010;opacity:0.7">1.4</div>
<div class="t" style="left:208px;top:443.5px;font-size:4px;color:#803010;opacity:0.7">1.2</div>
<svg class="a" style="left:0;top:0" width="80" height="95" viewBox="0 0 80 95" fill="#a83008">
<rect x="27" y="61.5" width="2.6" height="18"/><rect x="27" y="77" width="17" height="2.6"/>
<path d="M25.3,63.5L28.3,59L31.3,63.5Z M42,75.3L46.5,78.3L42,81.3Z"/>
</svg>
<div class="t" style="left:34px;top:60.5px;font-size:3.6px;color:#3a6a10">Y axis</div>
<div class="t" style="left:42px;top:85.5px;font-size:3.6px;color:#3a6a10">X axis</div>
<div class="a" style="left:342.5px;top:53px;width:65.5px;height:9px;background:#0a920a"></div>
<div class="t" style="left:343.2px;top:54.6px;font-size:7.04px;color:#f2fff2">(2448x1920) Normal</div>
<svg class="a" style="left:390px;top:430px" width="22" height="20" viewBox="390 430 22 20">
<path d="M395.3,439.5v4.5M406,439.5v4.5" stroke="#d02010" stroke-width="1"/><rect x="395.5" y="440.5" width="10.5" height="2.5" fill="#d02010"/>
</svg>
<div class="t" style="left:399px;top:434.5px;font-size:4px;color:#907010">100 µ</div>
<div class="a" style="left:412px;top:49px;width:7px;height:404px;background:#282828;"></div>
<div class="a" style="left:413px;top:49px;width:4.6px;height:404px;background:#3a3a3a;"></div>
<svg class="a" style="left:412px;top:49px" width="7" height="8" viewBox="412 49 7 8"><path d="M413.6,54.5l1.7,-2l1.7,2" stroke="#999" stroke-width="0.7" fill="none"/></svg>
<div class="a" style="left:418px;top:49px;width:1.5px;height:404px;background:#1c1c1c;"></div>
<div class="a" style="left:419.5px;top:49px;width:36.5px;height:404px;background:#262626;"></div>
<div class="a" style="left:420.6px;top:84px;width:0.8px;height:369px;background:#2f2f2f;"></div>
<div class="a" style="left:453.3px;top:84px;width:0.8px;height:369px;background:#2f2f2f;"></div>
<div class="a" style="left:456px;top:49px;width:2px;height:404px;background:#151515;"></div>
<svg class="a" style="left:420px;top:50px" width="7" height="8" viewBox="420 50 7 8"><path d="M421.5,51.5h4M422.2,51.5v3h2.6v-3M421.5,54.5h4M423.5,54.5v2.5" stroke="#8a8a8a" stroke-width="0.8" fill="none"/></svg>
<div class="a" style="left:428.7px;top:51.5px;width:27.2px;height:14.3px;background:#2c5b79;"></div>
<div class="t" style="left:430.5px;top:56.2px;font-size:4.3px;color:#dde8f0;">Edge Tool</div>
<div class="a" style="left:433.8px;top:68px;width:20px;height:8.6px;background:#3c3d3f;"></div>
<svg class="a" style="left:433.8px;top:68px" width="20" height="8.6" viewBox="433.8 68 20 8.6"><circle cx="441.40000000000003" cy="72.3" r="2.3" fill="none" stroke="#e0e0e0" stroke-width="1.6" stroke-dasharray="1.2,0.6"/><circle cx="441.40000000000003" cy="72.3" r="1.6" fill="none" stroke="#e8e8e8" stroke-width="1"/><path d="M447.8,70.5l2.4,1.8l-2.4,1.8z" fill="#d8d8d8"/></svg>
<div class="t" style="left:423.4px;top:80px;font-size:4.6px;color:#4a4a4a;">Tool Paper</div>
<div class="a" style="left:447px;top:82px;width:8px;height:0.6px;background:#3a3a3a;"></div>
<div class="a" style="left:423.4px;top:87.7px;width:12px;height:12px;background:#2c2c2c;border:0.7px solid #1b1b1b"></div>
<div class="a" style="left:438.4px;top:87.7px;width:12px;height:12px;background:#2c2c2c;border:0.7px solid #1b1b1b"></div>
<div class="a" style="left:423.4px;top:101px;width:12px;height:12px;background:#2c2c2c;border:0.7px solid #1b1b1b"></div>
<div class="a" style="left:438.4px;top:101px;width:12px;height:12px;background:#2c2c2c;border:0.7px solid #1b1b1b"></div>
<div class="a" style="left:423.4px;top:116.3px;width:12px;height:12px;background:#2c2c2c;border:0.7px solid #1b1b1b"></div>
<svg class="a" style="left:418px;top:85px" width="40" height="46" viewBox="418 85 40 46" fill="none" stroke="#545454" stroke-width="0.8"><path d="M426,97l6,-6M430,91h2v2"/><circle cx="444.4" cy="93.7" r="3.3"/><path d="M442.5,95.5l1.9,-1.8l1.9,1.8"/><path d="M425.5,104.5h3M425.5,108.5h7.5M429,106.5h3M432,104v3"/><path d="M440.5,104.5h3M440.5,108.5h7.5M444,106.5h3M447,104v3"/><path d="M426,119h7M426,121.5h7M426,124h7M426,126.5h7" /></svg>
<div class="a" style="left:458px;top:49px;width:117px;height:102px;background:#272727;"></div>
<div class="a" style="left:458px;top:49.4px;width:117px;height:13.3px;background:linear-gradient(#46494e,#43464b)"></div>
<div class="t" style="left:459.4px;top:51.6px;font-size:8.39px;color:#e4e4e4;font-weight:bold">Digital Indicator</div>
<svg class="a" style="left:560.7px;top:53px" width="14" height="8" viewBox="560.7 53 14 8"><path d="M561.7,54h4M562.4000000000001,54v2.8h2.6v-2.8M561.7,56.8h4M563.7,56.8v2.6" stroke="#bdbdbd" stroke-width="0.8" fill="none"/><rect x="568.2" y="53.5" width="5.5" height="5.5" fill="#2a2b2e"/><path d="M569.5,54.8l3,3M572.5,54.8l-3,3" stroke="#d0d0d0" stroke-width="0.8"/></svg>
<div class="a" style="left:458px;top:63px;width:117px;height:11px;background:#262626;"></div>
<div class="a" style="left:459.2px;top:64.2px;width:49.3px;height:8.3px;background:#2f2f2f;"></div>
<div class="t" style="left:460px;top:67px;font-size:4.57px;color:#c4c4c4;">Reference coordinates</div>
<div class="a" style="left:510px;top:64.2px;width:51.8px;height:8.3px;background:#111111;"></div>
<div class="t" style="left:511.5px;top:67px;font-size:4.9px;color:#e0e0e0;">Alignment coordinates</div>
<div class="a" style="left:458.5px;top:72.8px;width:116px;height:26px;background:#2b2b2b;"></div>
<div class="a" style="left:477px;top:75.3px;width:96px;height:20.7px;background:#000000;border:0.6px solid #3a3a3a"></div>
<div class="t" style="left:463.5px;top:79.5px;font-size:12.3px;color:#dcdcdc;">X</div>
<div class="t" style="right:198.29999999999995px;top:78.6px;font-size:13.7px;color:#d7b52e">+13.2367</div>
<div class="t" style="left:555.6px;top:83.89999999999999px;font-size:6.6px;color:#c4a22a;letter-spacing:-0.3px">mm</div>
<div class="a" style="left:458.5px;top:98.9px;width:116px;height:26px;background:#2b2b2b;"></div>
<div class="a" style="left:477px;top:101.4px;width:96px;height:20.7px;background:#000000;border:0.6px solid #3a3a3a"></div>
<div class="t" style="left:463.5px;top:105.60000000000001px;font-size:12.3px;color:#dcdcdc;">Y</div>
<div class="t" style="right:198.29999999999995px;top:104.7px;font-size:13.7px;color:#d7b52e">-2.8260</div>
<div class="t" style="left:555.6px;top:110.0px;font-size:6.6px;color:#c4a22a;letter-spacing:-0.3px">mm</div>
<div class="a" style="left:458.5px;top:124.9px;width:116px;height:26px;background:#2b2b2b;"></div>
<div class="a" style="left:477px;top:127.4px;width:96px;height:20.7px;background:#000000;border:0.6px solid #3a3a3a"></div>
<div class="t" style="left:463.5px;top:131.6px;font-size:12.3px;color:#dcdcdc;">Z</div>
<div class="t" style="right:198.29999999999995px;top:130.70000000000002px;font-size:13.7px;color:#d7b52e">+4.7450</div>
<div class="t" style="left:555.6px;top:136.0px;font-size:6.6px;color:#c4a22a;letter-spacing:-0.3px">mm</div>
<div class="a" style="left:575px;top:49px;width:2px;height:264px;background:#141414;"></div>
<div class="a" style="left:577px;top:49px;width:173px;height:147px;background:#262626;"></div>
<div class="a" style="left:577px;top:49.4px;width:173px;height:13.3px;background:linear-gradient(#46494e,#43464b)"></div>
<div class="t" style="left:578.5px;top:51.9px;font-size:8.39px;color:#e4e4e4;font-weight:bold">Graphic</div>
<svg class="a" style="left:735.8px;top:53px" width="14" height="8" viewBox="735.8 53 14 8"><path d="M736.8,54h4M737.5,54v2.8h2.6v-2.8M736.8,56.8h4M738.8,56.8v2.6" stroke="#bdbdbd" stroke-width="0.8" fill="none"/><rect x="743.3" y="53.5" width="5.5" height="5.5" fill="#2a2b2e"/><path d="M744.5999999999999,54.8l3,3M747.5999999999999,54.8l-3,3" stroke="#d0d0d0" stroke-width="0.8"/></svg>
<div class="a" style="left:577px;top:62.7px;width:173px;height:12px;background:#272727;"></div>
<div class="a" style="left:579px;top:63.8px;width:30.2px;height:10.1px;background:#222222;"></div>
<div class="t" style="left:580.7px;top:66.8px;font-size:5.2px;color:#c8c8c8;">XY</div>
<div class="a" style="left:609.2px;top:63.8px;width:31.6px;height:10.1px;background:#131313;"></div>
<div class="t" style="left:612.3px;top:66.8px;font-size:5.2px;color:#f0f0f0;">XZ</div>
<div class="a" style="left:646.5px;top:66.5px;width:3.5px;height:4.5px;background:#3a3a3a;"></div>
<div class="t" style="left:651px;top:66.8px;font-size:5.2px;color:#b0b0b0;">FOV</div>
<div class="a" style="left:727.7px;top:64.5px;width:20px;height:8px;background:#3c3d3f;"></div>
<svg class="a" style="left:727.7px;top:64.5px" width="20" height="8" viewBox="727.7 64.5 20 8"><circle cx="735.3000000000001" cy="68.5" r="2.3" fill="none" stroke="#e0e0e0" stroke-width="1.6" stroke-dasharray="1.2,0.6"/><circle cx="735.3000000000001" cy="68.5" r="1.6" fill="none" stroke="#e8e8e8" stroke-width="1"/><path d="M741.7,66.7l2.4,1.8l-2.4,1.8z" fill="#d8d8d8"/></svg>
<div class="a" style="left:579px;top:74.8px;width:161.5px;height:95.2px;background:#c9c9c9;"></div>
<div class="t" style="left:580.5px;top:76px;font-size:3.8px;color:#303030;">Sample1</div>
<div class="a" style="left:740.5px;top:74.8px;width:7.5px;height:94.2px;background:#2d2d2d;"></div>
<div class="a" style="left:741.3px;top:75.5px;width:6px;height:6px;background:#3c3c3c;"></div>
<div class="a" style="left:741.3px;top:161.5px;width:6px;height:6px;background:#3c3c3c;"></div>
<div class="a" style="left:741.8px;top:82px;width:5px;height:76px;background:#363636;"></div>
<div class="a" style="left:579px;top:170px;width:161.5px;height:6.5px;background:#2b2b2b;"></div>
<div class="a" style="left:579.5px;top:170.3px;width:5.5px;height:5.8px;background:#3a3a3a;"></div>
<div class="a" style="left:735px;top:170.3px;width:5.5px;height:5.8px;background:#3a3a3a;"></div>
<div class="a" style="left:740.5px;top:169px;width:7.5px;height:7px;background:#202020;"></div>
<svg class="a" style="left:579px;top:75px" width="162" height="95" viewBox="579 75 162 95" fill="none" stroke="#3a3a3a" stroke-width="0.6"><path d="M640,82.4H663" stroke="#e27ae2" stroke-width="1.1"/><path d="M639,91.2L643.5,82.2L649.3,91.5L656.5,84.3L662.7,92"/><path d="M654.5,87l2.5,-2.5" stroke="#111" stroke-width="1.1"/><circle cx="649.3" cy="91.3" r="0.8" fill="#111"/><path d="M681.5,96.5V151" stroke="#6a6a6a" stroke-width="0.8" stroke-dasharray="3,0.6"/><path d="M681,96.5h1.2M681,151h1.2" stroke="#333"/><path d="M642.4,152.4L649.3,160.4L656.3,152.9L659.5,159.3L667.5,153.5"/><circle cx="659.5" cy="159.2" r="0.8" fill="#111"/></svg>
<div class="t" style="left:637.2px;top:82.5px;font-size:3.4px;color:#404040;">10</div>
<div class="t" style="left:641px;top:88.5px;font-size:3.4px;color:#404040;">9</div>
<div class="t" style="left:652px;top:88.5px;font-size:3.4px;color:#404040;">1</div>
<div class="t" style="left:660px;top:88.5px;font-size:3.4px;color:#404040;">5</div>
<div class="t" style="left:683px;top:119px;font-size:3.4px;color:#404040;">5</div>
<div class="t" style="left:643px;top:162.3px;font-size:3.4px;color:#404040;">15</div>
<div class="t" style="left:657.5px;top:162px;font-size:3.4px;color:#404040;">7</div>
<div class="t" style="left:653.5px;top:157.5px;font-size:3.4px;color:#404040;">11</div>
<div class="t" style="left:664px;top:156.5px;font-size:3.4px;color:#404040;">6</div>
<div class="a" style="left:579px;top:180px;width:14.5px;height:12px;background:#474747;"></div>
<div class="a" style="left:596.3px;top:180px;width:14.5px;height:12px;background:#474747;"></div>
<div class="a" style="left:614px;top:180px;width:14.5px;height:12px;background:#474747;"></div>
<svg class="a" style="left:578px;top:179px" width="54" height="14" viewBox="578 179 54 14" fill="none" stroke="#e4e4e4" stroke-width="0.9"><circle cx="585" cy="185" r="3.2"/><path d="M587.3,187.3l3,3" stroke-width="1.5"/><path d="M583.3,185h3.4M585,183.3v3.4"/><circle cx="602.3" cy="185" r="3.2"/><path d="M604.6,187.3l3,3" stroke-width="1.5"/><path d="M600.6,185h3.4"/><rect x="617.5" y="182.5" width="7.5" height="7"/><rect x="619.3" y="184.3" width="3.9" height="3.4" fill="#ddd" stroke="none"/></svg>
<div class="t" style="left:632px;top:182.2px;font-size:4.6px;color:#c8c8c8;">Point 1</div>
<div class="t" style="left:632px;top:189px;font-size:4.6px;color:#c8c8c8;">Axis  1</div>
<div class="a" style="left:648px;top:183.3px;width:32px;height:0.8px;background:#6a6a6a;"></div>
<div class="a" style="left:648px;top:190px;width:32px;height:0.8px;background:#6a6a6a;"></div>
<svg class="a" style="left:719px;top:180px" width="8" height="14" viewBox="719 180 8 14"><circle cx="722" cy="184.3" r="1.6" fill="#3a8ac8" stroke="#7ab" stroke-width="0.4"/><circle cx="722" cy="191" r="1.6" fill="#222" stroke="#555" stroke-width="0.4"/></svg>
<div class="t" style="left:725px;top:182.3px;font-size:4.8px;color:#c8c8c8;">Size</div>
<div class="t" style="left:725px;top:189px;font-size:4.8px;color:#c8c8c8;">Mask</div>
<div class="a" style="left:458px;top:151px;width:117px;height:162px;background:#262626;"></div>
<div class="a" style="left:458px;top:151px;width:117px;height:1.8px;background:#1a1a1a;"></div>
<div class="a" style="left:458px;top:152.6px;width:117px;height:13.3px;background:linear-gradient(#46494e,#43464b)"></div>
<div class="t" style="left:459.3px;top:154.6px;font-size:8.3px;color:#e4e4e4;font-weight:bold">Measurement items</div>
<svg class="a" style="left:560.7px;top:156px" width="14" height="8" viewBox="560.7 156 14 8"><path d="M561.7,157h4M562.4000000000001,157v2.8h2.6v-2.8M561.7,159.8h4M563.7,159.8v2.6" stroke="#bdbdbd" stroke-width="0.8" fill="none"/><rect x="568.2" y="156.5" width="5.5" height="5.5" fill="#2a2b2e"/><path d="M569.5,157.8l3,3M572.5,157.8l-3,3" stroke="#d0d0d0" stroke-width="0.8"/></svg>
<div class="a" style="left:458px;top:166px;width:117px;height:11px;background:#262626;"></div>
<div class="a" style="left:459.2px;top:166.7px;width:29.1px;height:9.6px;background:#2a2a2a;"></div>
<div class="t" style="left:468.5px;top:169.6px;font-size:4.6px;color:#bdbdbd;">XY</div>
<div class="a" style="left:489.2px;top:166.7px;width:29.1px;height:9.6px;background:#141414;"></div>
<div class="t" style="left:500.3px;top:169.6px;font-size:4.6px;color:#d0d0d0;">XZ</div>
<div class="a" style="left:553.3px;top:167.5px;width:20.4px;height:8.3px;background:#3c3d3f;"></div>
<svg class="a" style="left:553.3px;top:167.5px" width="20.4" height="8.3" viewBox="553.3 167.5 20.4 8.3"><circle cx="561.0519999999999" cy="171.65" r="2.3" fill="none" stroke="#e0e0e0" stroke-width="1.6" stroke-dasharray="1.2,0.6"/><circle cx="561.0519999999999" cy="171.65" r="1.6" fill="none" stroke="#e8e8e8" stroke-width="1"/><path d="M567.5799999999999,169.85l2.4,1.8l-2.4,1.8z" fill="#d8d8d8"/></svg>
<div class="a" style="left:459px;top:178.4px;width:114px;height:7.2px;background:#303030;"></div>
<svg class="a" style="left:460px;top:178.4px" width="6" height="7" viewBox="0 0 6 7"><path d="M1,2.2h4l-2,3z" fill="#e8e8e8"/></svg>
<div class="t" style="left:466.3px;top:178.70000000000002px;font-size:6.5px;color:#e6e6e6;font-weight:bold">Direct measurement (recallable)</div>
<div class="a" style="left:459px;top:212.6px;width:114px;height:7.2px;background:#303030;"></div>
<svg class="a" style="left:460px;top:212.6px" width="6" height="7" viewBox="0 0 6 7"><path d="M1,2.2h4l-2,3z" fill="#e8e8e8"/></svg>
<div class="t" style="left:466.3px;top:212.9px;font-size:6.5px;color:#e6e6e6;font-weight:bold">Recall measurement</div>
<div class="a" style="left:459px;top:246.7px;width:114px;height:7.2px;background:#303030;"></div>
<svg class="a" style="left:460px;top:246.7px" width="6" height="7" viewBox="0 0 6 7"><path d="M1,2.2h4l-2,3z" fill="#e8e8e8"/></svg>
<div class="t" style="left:466.3px;top:247.0px;font-size:6.5px;color:#e6e6e6;font-weight:bold">Alignment</div>
<div class="a" style="left:459px;top:267.4px;width:114px;height:7.2px;background:#303030;"></div>
<svg class="a" style="left:460px;top:267.4px" width="6" height="7" viewBox="0 0 6 7"><path d="M1,2.2h4l-2,3z" fill="#e8e8e8"/></svg>
<div class="t" style="left:466.3px;top:267.7px;font-size:6.5px;color:#e6e6e6;font-weight:bold">Virtual point</div>
<div class="a" style="left:459px;top:304.4px;width:114px;height:7.2px;background:#303030;"></div>
<svg class="a" style="left:460px;top:304.4px" width="6" height="7" viewBox="0 0 6 7"><path d="M2,1.5v4l2.8,-2z" fill="#e8e8e8"/></svg>
<div class="t" style="left:466.3px;top:304.7px;font-size:6.5px;color:#e6e6e6;font-weight:bold">Macro</div>
<div class="a" style="left:459.5px;top:186.0px;width:111.1px;height:12.8px;background:#1e1e1e;"></div>
<div class="a" style="left:459.5px;top:198.29999999999998px;width:83.69999999999999px;height:12.8px;background:#1e1e1e;"></div>
<div class="a" style="left:459.5px;top:220.1px;width:111.1px;height:12.8px;background:#1e1e1e;"></div>
<div class="a" style="left:459.5px;top:231.9px;width:83.69999999999999px;height:12.8px;background:#1e1e1e;"></div>
<div class="a" style="left:459.5px;top:254.1px;width:111.1px;height:12.8px;background:#1e1e1e;"></div>
<div class="a" style="left:459.5px;top:275.3px;width:111.1px;height:12.8px;background:#1e1e1e;"></div>
<div class="a" style="left:459.5px;top:287.6px;width:56.3px;height:12.8px;background:#1e1e1e;"></div>
<div class="a" style="left:460.5px;top:186.9px;width:26.4px;height:11.2px;background:#494949;"></div>
<div class="a" style="left:488.4px;top:186.9px;width:26.4px;height:11.2px;background:#494949;"></div>
<div class="a" style="left:515.9px;top:186.9px;width:26.4px;height:11.2px;background:#494949;"></div>
<div class="a" style="left:543.2px;top:186.9px;width:26.4px;height:11.2px;background:#494949;"></div>
<div class="a" style="left:460.5px;top:199.2px;width:26.4px;height:11.2px;background:#494949;"></div>
<div class="a" style="left:488.4px;top:199.2px;width:26.4px;height:11.2px;background:#494949;"></div>
<div class="a" style="left:515.9px;top:199.2px;width:26.4px;height:11.2px;background:#494949;"></div>
<div class="a" style="left:460.5px;top:221px;width:26.4px;height:11.2px;background:#494949;"></div>
<div class="a" style="left:488.4px;top:221px;width:26.4px;height:11.2px;background:#494949;"></div>
<div class="a" style="left:515.9px;top:221px;width:26.4px;height:11.2px;background:#494949;"></div>
<div class="a" style="left:543.2px;top:221px;width:26.4px;height:11.2px;background:#494949;"></div>
<div class="a" style="left:460.5px;top:232.8px;width:26.4px;height:11.2px;background:#494949;"></div>
<div class="a" style="left:488.4px;top:232.8px;width:26.4px;height:11.2px;background:#494949;"></div>
<div class="a" style="left:515.9px;top:232.8px;width:26.4px;height:11.2px;background:#494949;"></div>
<div class="a" style="left:460.5px;top:255px;width:26.4px;height:11.2px;background:#494949;"></div>
<div class="a" style="left:488.4px;top:255px;width:26.4px;height:11.2px;background:#494949;"></div>
<div class="a" style="left:515.9px;top:255px;width:26.4px;height:11.2px;background:#494949;"></div>
<div class="a" style="left:543.2px;top:255px;width:26.4px;height:11.2px;background:#494949;"></div>
<div class="a" style="left:460.5px;top:276.2px;width:26.4px;height:11.2px;background:#494949;"></div>
<div class="a" style="left:488.4px;top:276.2px;width:26.4px;height:11.2px;background:#494949;"></div>
<div class="a" style="left:515.9px;top:276.2px;width:26.4px;height:11.2px;background:#494949;"></div>
<div class="a" style="left:543.2px;top:276.2px;width:26.4px;height:11.2px;background:#494949;"></div>
<div class="a" style="left:460.5px;top:288.5px;width:26.4px;height:11.2px;background:#494949;"></div>
<div class="a" style="left:488.4px;top:288.5px;width:26.4px;height:11.2px;background:#494949;"></div>
<svg class="a" style="left:458px;top:185px" width="117" height="118" viewBox="458 185 117 118" fill="none" stroke="#d6d6d6" stroke-width="0.6"><circle cx="474" cy="192.5" r="0.9" fill="#eee" stroke="none"/><path d="M497.8,188.5l8,8.5"/><circle cx="497.8" cy="188.5" r="0.9" fill="#eee"/><circle cx="505.8" cy="197" r="0.9" fill="#eee"/><circle cx="529" cy="192.5" r="4"/><circle cx="525.5" cy="194" r="0.7" fill="#eee"/><circle cx="531" cy="189" r="0.7" fill="#eee"/><circle cx="532.5" cy="194.5" r="0.7" fill="#eee"/><rect x="552" y="189" width="8" height="6.5" rx="2" transform="rotate(35 556 192.2)"/><path d="M468.5,200.7l10.5,9.8"/><circle cx="468.5" cy="200.7" r="0.9" fill="#eee"/><circle cx="474" cy="205.5" r="1" fill="#eee"/><circle cx="479" cy="210.3" r="0.9" fill="#eee"/><path d="M496,209.5h10.5M497,209.5l6.5,-8.5"/><path d="M500,206.5q2.5,0.8 3,3"/><circle cx="503.5" cy="201.5" r="0.8" fill="#eee"/><ellipse cx="529" cy="205" rx="4" ry="4.8"/><circle cx="526" cy="207" r="0.7" fill="#eee"/><circle cx="532" cy="202" r="0.7" fill="#eee"/><path d="M469,222.5l10,9M479,222.5l-10,9M470,223.5q4,-1.5 8,0"/><path d="M497,231h10M497,231l7,-8.5M498,231l-1.5,-7M500.5,227.5q3,1 4,3.5"/><path d="M525,226.5l3.5,4.5l7,-8"/><rect x="527" y="228.5" width="3" height="2" transform="rotate(-40 528.5 229.5)"/><path d="M551,229.5h11q1,-2 -2,-2.5h-5q-3,0.5 -4,2.5M556.5,222v5"/><circle cx="556.5" cy="222" r="0.7" fill="#eee"/><circle cx="474" cy="238.5" r="4"/><path d="M470,243.5l8,-10"/><circle cx="501" cy="238" r="3.8"/><circle cx="503.5" cy="242" r="1.5"/><path d="M525.5,235.5q0,-2 2,-2h3q2,0 2,2v4q0,3 -3.5,3q-3.5,0 -3.5,-3z"/><path d="M473.5,256v10M468,262h12M470,259.5h3M470,261h3"/><path d="M502,256v10M496,261h11M497,260h9v2h-9z"/><path d="M529.5,256v10M524,263.5h11"/><circle cx="530.5" cy="260" r="1" fill="#eee"/><circle cx="527" cy="263.5" r="0.9" fill="#eee"/><path d="M532.5,260h2"/><path d="M551,258l11,7M562,258l-11,7M553,263q3,-4 7,0"/><circle cx="556.5" cy="261.5" r="0.9" fill="#eee"/><path d="M473.5,277v10M468,284.5h12M470.5,280.5h5v4"/><circle cx="475.5" cy="280.5" r="0.7" fill="#eee"/><path d="M500,277v10M495.5,284.5h11M500,284l6,-6M502,278h4v2"/><path d="M528,277v10M523.5,285h11M528,279.5h5v3"/><circle cx="533" cy="282.5" r="0.9" fill="#eee"/><path d="M556.5,277v10M550.5,282h12"/><circle cx="559" cy="280" r="0.7" fill="#eee"/><circle cx="559" cy="286" r="1" fill="#eee"/><path d="M473.5,289.5v10M468,295h12M470.5,292.5h3M470.5,294h3"/><circle cx="477" cy="293" r="0.9" fill="#eee"/><path d="M501,289.5v10M495.5,295h11M497,297.5h3"/><circle cx="504" cy="292.5" r="0.9" fill="#eee"/></svg>
<div class="a" style="left:577px;top:196px;width:173px;height:115px;background:#262626;"></div>
<div class="a" style="left:577px;top:196.3px;width:173px;height:13.3px;background:linear-gradient(#46494e,#43464b)"></div>
<div class="t" style="left:578.3px;top:198.2px;font-size:8.43px;color:#e4e4e4;font-weight:bold">List &lt;New list&gt;</div>
<svg class="a" style="left:735.8px;top:200px" width="14" height="8" viewBox="735.8 200 14 8"><path d="M736.8,201h4M737.5,201v2.8h2.6v-2.8M736.8,203.8h4M738.8,203.8v2.6" stroke="#bdbdbd" stroke-width="0.8" fill="none"/><rect x="743.3" y="200.5" width="5.5" height="5.5" fill="#2a2b2e"/><path d="M744.5999999999999,201.8l3,3M747.5999999999999,201.8l-3,3" stroke="#d0d0d0" stroke-width="0.8"/></svg>
<div class="a" style="left:577px;top:209.8px;width:173px;height:11px;background:#222222;"></div>
<div class="t" style="left:579.9px;top:214.1px;font-size:5.14px;color:#c8c8c8;">Navigation&lt;(Alignment not complete)&gt;</div>
<div class="a" style="left:720.7px;top:211px;width:20.3px;height:8.8px;background:#3c3d3f;"></div>
<svg class="a" style="left:720.7px;top:211px" width="20.3" height="8.8" viewBox="720.7 211 20.3 8.8"><circle cx="728.4140000000001" cy="215.4" r="2.3" fill="none" stroke="#e0e0e0" stroke-width="1.6" stroke-dasharray="1.2,0.6"/><circle cx="728.4140000000001" cy="215.4" r="1.6" fill="none" stroke="#e8e8e8" stroke-width="1"/><path d="M734.9100000000001,213.6l2.4,1.8l-2.4,1.8z" fill="#d8d8d8"/></svg>
<div class="a" style="left:578.8px;top:220.9px;width:162.2px;height:88.6px;background:#e8e8e8;"></div>
<div class="a" style="left:578.8px;top:220.9px;width:162.2px;height:88.6px;overflow:hidden">
<div class="t" style="left:3.3px;top:1.60px;font-size:5.3px;color:#3c3c3c">003</div>
<div class="t" style="left:17.2px;top:1.60px;font-size:5.23px;color:#2c2c2c">Point-to-point</div>
<div class="t" style="left:3.3px;top:8.63px;font-size:5.3px;color:#3c3c3c">004</div>
<div class="t" style="left:17.2px;top:8.63px;font-size:5.23px;color:#2c2c2c">Intersection between</div>
<div class="t" style="left:3.3px;top:15.66px;font-size:5.3px;color:#3c3c3c">005</div>
<div class="t" style="left:17.2px;top:15.66px;font-size:5.23px;color:#2c2c2c">Point-to-point</div>
<div class="t" style="left:3.3px;top:22.69px;font-size:5.3px;color:#3c3c3c">006</div>
<div class="t" style="left:17.2px;top:22.69px;font-size:5.23px;color:#2c2c2c">Point-to-point</div>
<div class="t" style="left:3.3px;top:29.72px;font-size:5.3px;color:#3c3c3c">007</div>
<div class="t" style="left:17.2px;top:29.72px;font-size:5.23px;color:#2c2c2c">Intersection between</div>
<div class="t" style="left:3.3px;top:36.75px;font-size:5.3px;color:#3c3c3c">008</div>
<div class="t" style="left:17.2px;top:36.75px;font-size:5.23px;color:#2c2c2c">Point-to-point</div>
<div class="t" style="left:3.3px;top:43.78px;font-size:5.3px;color:#3c3c3c">009</div>
<div class="t" style="left:17.2px;top:43.78px;font-size:5.23px;color:#2c2c2c">Point-to-point</div>
<div class="t" style="left:3.3px;top:50.81px;font-size:5.3px;color:#3c3c3c">010</div>
<div class="t" style="left:17.2px;top:50.81px;font-size:5.23px;color:#2c2c2c">Intersection between</div>
<div class="t" style="left:3.3px;top:57.84px;font-size:5.3px;color:#3c3c3c">011</div>
<div class="t" style="left:17.2px;top:57.84px;font-size:5.23px;color:#2c2c2c">Point-to-point</div>
<div class="t" style="left:3.3px;top:64.87px;font-size:5.3px;color:#3c3c3c">012</div>
<div class="t" style="left:17.2px;top:64.87px;font-size:5.23px;color:#2c2c2c">Point-to-point</div>
<div class="t" style="left:3.3px;top:71.90px;font-size:5.3px;color:#3c3c3c">013</div>
<div class="t" style="left:17.2px;top:71.90px;font-size:5.23px;color:#2c2c2c">Intersection between</div>
<div class="a" style="left:0.5px;top:76.93px;width:161px;height:7.9px;background:#4bacd0"></div>
<div class="t" style="left:3.3px;top:78.93px;font-size:5.3px;color:#3c3c3c">014</div>
<div class="t" style="left:17.2px;top:78.93px;font-size:5.23px;color:#2c2c2c">Point-to-point</div>
</div>
<div class="a" style="left:741px;top:220.9px;width:7px;height:88.6px;background:#2a2a2a;"></div>
<div class="a" style="left:741.6px;top:221.5px;width:5.8px;height:87px;background:#7e7e7e;"></div>
<div class="a" style="left:741.6px;top:221.5px;width:5.8px;height:6px;background:#333333;"></div>
<div class="a" style="left:741.6px;top:227.3px;width:5.8px;height:12.5px;background:#3e3e3e;"></div>
<div class="a" style="left:742.5px;top:268.5px;width:4px;height:2px;background:#5a5a5a;"></div>
<div class="a" style="left:741.6px;top:302.8px;width:5.8px;height:6.2px;background:#333333;"></div>
<svg class="a" style="left:741px;top:221px" width="7" height="89" viewBox="741 221 7 89"><path d="M743,225.5l1.5,-1.8l1.5,1.8z M743,305l1.5,1.8l1.5,-1.8z" fill="#ddd"/></svg>
<div class="a" style="left:577px;top:309.5px;width:173px;height:3.5px;background:#1a1a1a;"></div>
<div class="a" style="left:458px;top:311px;width:292px;height:2px;background:#151515;"></div>
<div class="a" style="left:458px;top:313px;width:292px;height:140px;background:#262626;"></div>
<div class="a" style="left:458px;top:313.3px;width:292px;height:13.3px;background:linear-gradient(#46494e,#43464b)"></div>
<div class="t" style="left:459.4px;top:316.4px;font-size:8.25px;color:#e4e4e4;font-weight:bold">Measurement results</div>
<svg class="a" style="left:735.8px;top:317px" width="14" height="8" viewBox="735.8 317 14 8"><path d="M736.8,318h4M737.5,318v2.8h2.6v-2.8M736.8,320.8h4M738.8,320.8v2.6" stroke="#bdbdbd" stroke-width="0.8" fill="none"/><rect x="743.3" y="317.5" width="5.5" height="5.5" fill="#2a2b2e"/><path d="M744.5999999999999,318.8l3,3M747.5999999999999,318.8l-3,3" stroke="#d0d0d0" stroke-width="0.8"/></svg>
<div class="a" style="left:458px;top:328.2px;width:286px;height:125px;background:#d0d0d0;"></div>
<div class="a" style="left:458px;top:328.2px;width:286px;height:8.4px;background:#dcdcdc;"></div>
<div class="a" style="left:616px;top:328.2px;width:42.6px;height:8.4px;background:#58b4d6;"></div>
<div class="t" style="left:460.5px;top:330.9px;font-size:6.7px;color:#2a2a2a;">Number</div>
<div class="t" style="left:499.6px;top:330.9px;font-size:6.7px;color:#2a2a2a;">Measurement items</div>
<div class="t" style="left:567.4px;top:330.9px;font-size:6.7px;color:#2a2a2a;">Items</div>
<div class="t" style="left:618.2px;top:330.9px;font-size:6.7px;color:#2a2a2a;">Sample1</div>
<div class="t" style="left:661.6px;top:330.9px;font-size:6.7px;color:#2a2a2a;">Sample2</div>
<div class="t" style="left:700.7px;top:330.9px;font-size:6.7px;color:#2a2a2a;">Sample3</div>
<div class="t" style="left:739.4px;top:330.9px;font-size:6.7px;color:#2a2a2a;width:4.6px;overflow:hidden">Sample4</div>
<div class="a" style="left:458px;top:337.4px;width:286px;height:8.53px;background:#e9e9e9;"></div>
<div class="a" style="left:458px;top:345px;width:286px;height:1px;background:#858585;"></div>
<div class="a" style="left:458px;top:337.4px;width:38.4px;height:8.0px;background:#4aaed2;"></div>
<div class="t" style="right:255.7px;top:339.40px;font-size:5.4px;color:#262626">001</div>
<div class="t" style="left:499.2px;top:339.4px;font-size:5.3px;color:#1c1c1c;">Point-to-point</div>
<div class="t" style="left:567.2px;top:339.4px;font-size:5.3px;color:#1c1c1c;">Distance</div>
<div class="t" style="right:93.20000000000005px;top:339.40px;font-size:5.4px;color:#2a2aa0">4.0318</div>
<div class="a" style="left:458px;top:345.93px;width:286px;height:8.53px;background:#d3d3d3;"></div>
<div class="a" style="left:458px;top:354px;width:286px;height:1px;background:#858585;"></div>
<div class="t" style="right:255.7px;top:347.93px;font-size:5.4px;color:#262626">002</div>
<div class="t" style="left:499.2px;top:347.93px;font-size:5.3px;color:#1c1c1c;">Point-to-point</div>
<div class="t" style="left:567.2px;top:347.93px;font-size:5.3px;color:#1c1c1c;">Distance</div>
<div class="t" style="right:93.20000000000005px;top:347.93px;font-size:5.4px;color:#2a2aa0">0.3956</div>
<div class="a" style="left:458px;top:354.46px;width:286px;height:8.53px;background:#e9e9e9;"></div>
<div class="a" style="left:458px;top:362px;width:286px;height:1px;background:#858585;"></div>
<div class="t" style="right:255.7px;top:356.46px;font-size:5.4px;color:#262626">003</div>
<div class="t" style="left:499.2px;top:356.46px;font-size:5.3px;color:#1c1c1c;">Point-to-point</div>
<div class="t" style="left:567.2px;top:356.46px;font-size:5.3px;color:#1c1c1c;">Distance</div>
<div class="t" style="right:93.20000000000005px;top:356.46px;font-size:5.4px;color:#2a2aa0">0.6020</div>
<div class="a" style="left:458px;top:362.99px;width:286px;height:8.53px;background:#d3d3d3;"></div>
<div class="a" style="left:458px;top:371px;width:286px;height:1px;background:#858585;"></div>
<div class="t" style="right:255.7px;top:364.99px;font-size:5.4px;color:#262626">004</div>
<div class="t" style="left:499.2px;top:364.99px;font-size:5.3px;color:#1c1c1c;">Intersection between</div>
<div class="t" style="left:567.2px;top:364.99px;font-size:5.3px;color:#1c1c1c;">Intersection angle A</div>
<div class="t" style="right:93.20000000000005px;top:364.99px;font-size:5.4px;color:#2a2aa0">61.3236</div>
<div class="a" style="left:458px;top:371.52px;width:286px;height:8.53px;background:#d3d3d3;"></div>
<div class="a" style="left:458px;top:380px;width:286px;height:1px;background:#858585;"></div>
<div class="t" style="right:255.7px;top:373.52px;font-size:5.4px;color:#262626">004</div>
<div class="t" style="left:499.2px;top:373.52px;font-size:5.3px;color:#1c1c1c;">Intersection between</div>
<div class="t" style="left:567.2px;top:373.52px;font-size:5.3px;color:#1c1c1c;">Intersection angle B</div>
<div class="t" style="right:93.20000000000005px;top:373.52px;font-size:5.4px;color:#2a2aa0">118.6764</div>
<div class="a" style="left:458px;top:380.05px;width:286px;height:8.53px;background:#e9e9e9;"></div>
<div class="a" style="left:458px;top:388px;width:286px;height:1px;background:#858585;"></div>
<div class="t" style="right:255.7px;top:382.05px;font-size:5.4px;color:#262626">005</div>
<div class="t" style="left:499.2px;top:382.05px;font-size:5.3px;color:#1c1c1c;">Point-to-point</div>
<div class="t" style="left:567.2px;top:382.05px;font-size:5.3px;color:#1c1c1c;">Distance</div>
<div class="t" style="right:93.20000000000005px;top:382.05px;font-size:5.4px;color:#2a2aa0">0.5323</div>
<div class="a" style="left:458px;top:388.58px;width:286px;height:8.53px;background:#d3d3d3;"></div>
<div class="a" style="left:458px;top:397px;width:286px;height:1px;background:#858585;"></div>
<div class="t" style="right:255.7px;top:390.58px;font-size:5.4px;color:#262626">006</div>
<div class="t" style="left:499.2px;top:390.58px;font-size:5.3px;color:#1c1c1c;">Point-to-point</div>
<div class="t" style="left:567.2px;top:390.58px;font-size:5.3px;color:#1c1c1c;">Distance</div>
<div class="t" style="right:93.20000000000005px;top:390.58px;font-size:5.4px;color:#2a2aa0">0.5657</div>
<div class="a" style="left:458px;top:397.11px;width:286px;height:8.53px;background:#e9e9e9;"></div>
<div class="a" style="left:458px;top:405px;width:286px;height:1px;background:#858585;"></div>
<div class="t" style="right:255.7px;top:399.11px;font-size:5.4px;color:#262626">007</div>
<div class="t" style="left:499.2px;top:399.11px;font-size:5.3px;color:#1c1c1c;">Intersection between</div>
<div class="t" style="left:567.2px;top:399.11px;font-size:5.3px;color:#1c1c1c;">Intersection angle A</div>
<div class="t" style="right:93.20000000000005px;top:399.11px;font-size:5.4px;color:#2a2aa0">65.5596</div>
<div class="a" style="left:458px;top:405.64px;width:286px;height:8.53px;background:#e9e9e9;"></div>
<div class="a" style="left:458px;top:414px;width:286px;height:1px;background:#858585;"></div>
<div class="t" style="right:255.7px;top:407.64px;font-size:5.4px;color:#262626">007</div>
<div class="t" style="left:499.2px;top:407.64px;font-size:5.3px;color:#1c1c1c;">Intersection between</div>
<div class="t" style="left:567.2px;top:407.64px;font-size:5.3px;color:#1c1c1c;">Intersection angle B</div>
<div class="t" style="right:93.20000000000005px;top:407.64px;font-size:5.4px;color:#2a2aa0">114.4404</div>
<div class="a" style="left:458px;top:414.17px;width:286px;height:8.53px;background:#d3d3d3;"></div>
<div class="a" style="left:458px;top:422px;width:286px;height:1px;background:#858585;"></div>
<div class="t" style="right:255.7px;top:416.17px;font-size:5.4px;color:#262626">008</div>
<div class="t" style="left:499.2px;top:416.17px;font-size:5.3px;color:#1c1c1c;">Point-to-point</div>
<div class="t" style="left:567.2px;top:416.17px;font-size:5.3px;color:#1c1c1c;">Distance</div>
<div class="t" style="right:93.20000000000005px;top:416.17px;font-size:5.4px;color:#2a2aa0">0.6016</div>
<div class="a" style="left:458px;top:422.7px;width:286px;height:8.53px;background:#e9e9e9;"></div>
<div class="a" style="left:458px;top:431px;width:286px;height:1px;background:#858585;"></div>
<div class="t" style="right:255.7px;top:424.70px;font-size:5.4px;color:#262626">009</div>
<div class="t" style="left:499.2px;top:424.7px;font-size:5.3px;color:#1c1c1c;">Point-to-point</div>
<div class="t" style="left:567.2px;top:424.7px;font-size:5.3px;color:#1c1c1c;">Distance</div>
<div class="t" style="right:93.20000000000005px;top:424.70px;font-size:5.4px;color:#2a2aa0">0.6168</div>
<div class="a" style="left:458px;top:431.23px;width:286px;height:8.53px;background:#d3d3d3;"></div>
<div class="a" style="left:458px;top:439px;width:286px;height:1px;background:#858585;"></div>
<div class="t" style="right:255.7px;top:433.23px;font-size:5.4px;color:#262626">010</div>
<div class="t" style="left:499.2px;top:433.23px;font-size:5.3px;color:#1c1c1c;">Intersection between</div>
<div class="t" style="left:567.2px;top:433.23px;font-size:5.3px;color:#1c1c1c;">Intersection angle A</div>
<div class="t" style="right:93.20000000000005px;top:433.23px;font-size:5.4px;color:#2a2aa0">117.2943</div>
<div class="a" style="left:458px;top:439.76px;width:286px;height:8.53px;background:#d3d3d3;"></div>
<div class="a" style="left:458px;top:448px;width:286px;height:1px;background:#858585;"></div>
<div class="t" style="right:255.7px;top:441.76px;font-size:5.4px;color:#262626">010</div>
<div class="t" style="left:499.2px;top:441.76px;font-size:5.3px;color:#1c1c1c;">Intersection between</div>
<div class="t" style="left:567.2px;top:441.76px;font-size:5.3px;color:#1c1c1c;">Intersection angle B</div>
<div class="t" style="right:93.20000000000005px;top:441.76px;font-size:5.4px;color:#2a2aa0">62.7057</div>
<div class="a" style="left:458px;top:448.29px;width:286px;height:8.53px;background:#e9e9e9;"></div>
<div class="a" style="left:458px;top:456px;width:286px;height:1px;background:#858585;"></div>
<div class="t" style="right:255.7px;top:450.29px;font-size:5.4px;color:#262626">011</div>
<div class="t" style="left:499.2px;top:450.29px;font-size:5.3px;color:#1c1c1c;">Point-to-point</div>
<div class="t" style="left:567.2px;top:450.29px;font-size:5.3px;color:#1c1c1c;">Distance</div>
<div class="t" style="right:93.20000000000005px;top:450.29px;font-size:5.4px;color:#2a2aa0">0.4262</div>
<div class="a" style="left:496.4px;top:328.2px;width:1px;height:125px;background:#5a5a5a;"></div>
<div class="a" style="left:564.1px;top:328.2px;width:1px;height:125px;background:#5a5a5a;"></div>
<div class="a" style="left:615.5px;top:328.2px;width:1px;height:125px;background:#5a5a5a;"></div>
<div class="a" style="left:658.1px;top:328.2px;width:1px;height:125px;background:#5a5a5a;"></div>
<div class="a" style="left:697.2px;top:328.2px;width:1px;height:125px;background:#5a5a5a;"></div>
<div class="a" style="left:736.0px;top:328.2px;width:1px;height:125px;background:#5a5a5a;"></div>
<div class="a" style="left:458px;top:336.5px;width:286px;height:1px;background:#7a7a7a;"></div>
<div class="a" style="left:458px;top:328px;width:286px;height:0.8px;background:#6a6a6a;"></div>
<div class="a" style="left:744px;top:327px;width:6px;height:126px;background:#2a2a2a;"></div>
<div class="a" style="left:744.3px;top:328px;width:5.4px;height:6px;background:#4a4a4a;"></div>
<svg class="a" style="left:744px;top:328px" width="6" height="7" viewBox="744 328 6 7"><path d="M745.5,333l1.5,-2l1.5,2z" fill="#ddd"/></svg>
<div class="a" style="left:744.3px;top:335px;width:5.4px;height:10px;background:#3a3a3a;"></div>
</div></body></html>
